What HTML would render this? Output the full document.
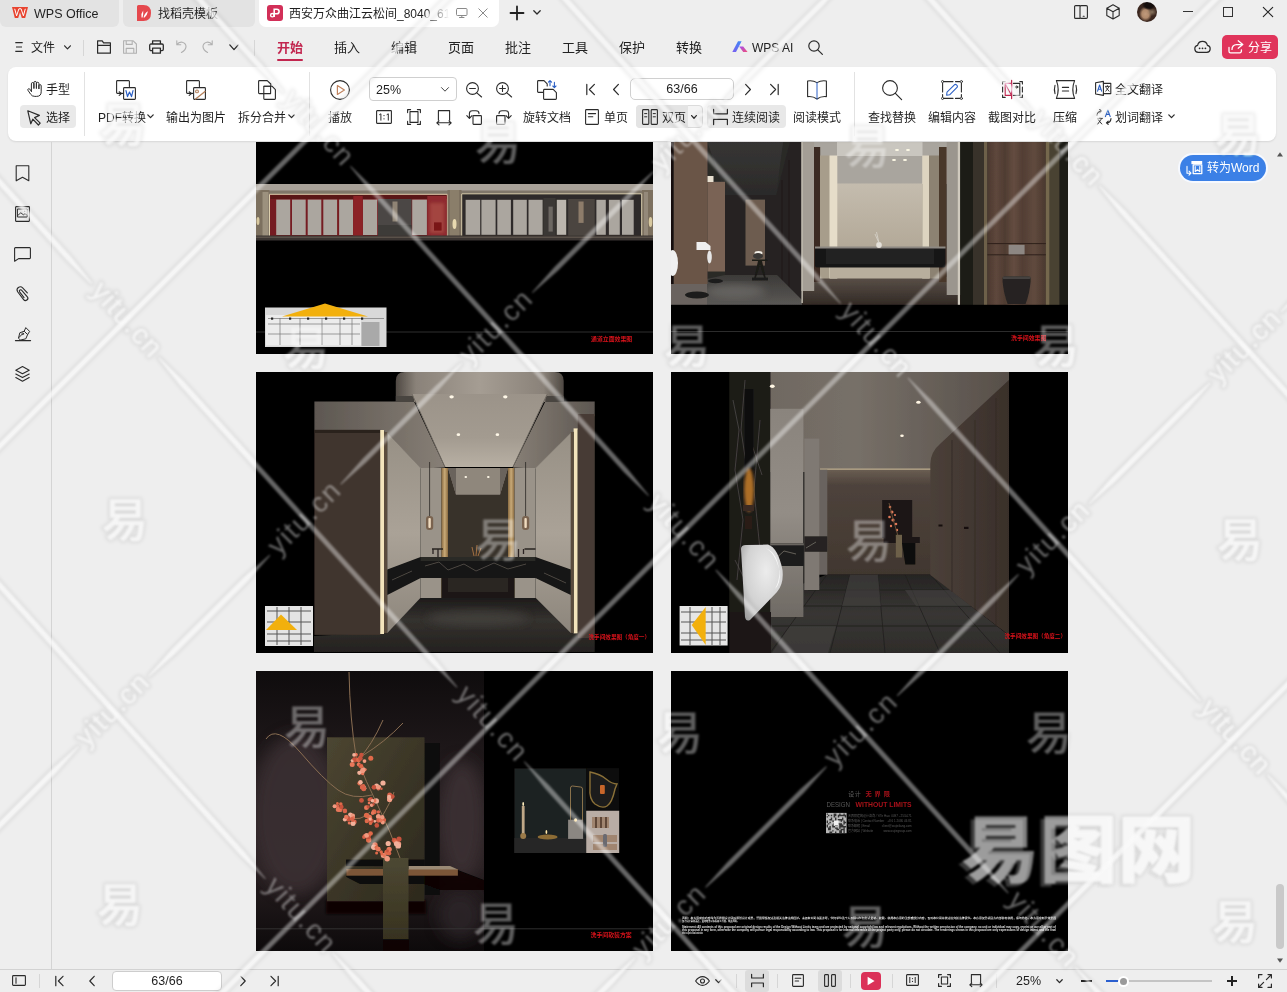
<!DOCTYPE html>
<html lang="zh-CN">
<head>
<meta charset="utf-8">
<title>WPS Office</title>
<style>
*{box-sizing:border-box;margin:0;padding:0}
html,body{width:1287px;height:992px;overflow:hidden;background:#eeeeee}
body{position:relative;font-family:"Liberation Sans","Noto Sans CJK SC",sans-serif;font-size:12px;color:#1f1f1f}
.a{position:absolute}
.t{position:absolute;white-space:nowrap;line-height:16px;height:16px}
svg{position:absolute;overflow:visible}
.ic{fill:none;stroke:#2b2b2b;stroke-width:1.2;stroke-linecap:round;stroke-linejoin:round}
.g{stroke:#b0b0b0}
.sep{position:absolute;width:1px;background:#d6d6d6}
/* title bar */
#tab1{left:0;top:0;width:118.500px;height:27px;background:#e3e3e3;border-radius:0 0 6px 6px}
#tab2{left:123px;top:0;width:132px;height:27px;background:#e3e3e3;border-radius:0 0 6px 6px}
#tab3{left:259px;top:0;width:240px;height:27px;background:#fff;border-radius:0 0 7px 7px}
.tt{font-size:13px;line-height:18px;height:18px;top:4.5px}
/* menu */
.m{font-size:13px;top:39px;line-height:18px;height:18px;color:#222}
#share{left:1222px;top:35px;width:56px;height:24px;background:#e0345b;border-radius:5px}
/* ribbon */
#ribbon{left:8px;top:67px;width:1268px;height:74px;background:#fff;border-radius:8px;box-shadow:0 1px 2px rgba(0,0,0,.10)}
.sel{position:absolute;background:#e9e9e9;border-radius:4px}
.box{position:absolute;background:#fff;border:1px solid #cfcfcf;border-radius:4px}
.l{top:110px}
/* sidebar */
#side{left:0;top:142px;width:52px;height:827px;border-right:1px solid #d4d4d4}
/* status */
#status{left:0;top:969px;width:1287px;height:23px;border-top:1px solid #d2d2d2;background:#eeeeee}
/* pages */
.pg{position:absolute;width:397px;background:#000;overflow:hidden}
</style>
</head>
<body>
<div id="root" style="position:absolute;left:0;top:0;width:1287px;height:992px;will-change:transform">

<!-- ================= PAGES ================= -->
<div id="pages" class="a" style="left:0;top:0;width:1287px;height:992px">
<svg id="pgs" style="left:0;top:0" width="1287" height="992" viewBox="0 0 1287 992">
<defs>
<filter id="b1" x="-5%" y="-5%" width="110%" height="110%"><feGaussianBlur stdDeviation="0.6"/></filter>
<filter id="b2" x="-10%" y="-10%" width="120%" height="120%"><feGaussianBlur stdDeviation="1.5"/></filter>
<filter id="b4" x="-20%" y="-20%" width="140%" height="140%"><feGaussianBlur stdDeviation="4"/></filter>
<filter id="b8" x="-30%" y="-30%" width="160%" height="160%"><feGaussianBlur stdDeviation="8"/></filter>
<clipPath id="c1"><rect x="256" y="73" width="397" height="281"/></clipPath>
<clipPath id="c2"><rect x="671" y="73" width="397" height="281"/></clipPath>
<clipPath id="c3"><rect x="256" y="372" width="397" height="281"/></clipPath>
<clipPath id="c4"><rect x="671" y="372" width="397" height="281"/></clipPath>
<clipPath id="c5"><rect x="256" y="671" width="397" height="280"/></clipPath>
<clipPath id="c6"><rect x="671" y="671" width="397" height="280"/></clipPath>
</defs>
<!--P1-->
<g id="P1" clip-path="url(#c1)">
<rect x="256" y="73" width="397" height="281" fill="#000"/>
<g filter="url(#b1)">
<rect x="256" y="184" width="397" height="7" fill="#a8a198"/>
<rect x="256" y="190.500" width="397" height="4" fill="#80776a"/>
<rect x="256" y="190" width="13.5" height="47" fill="#7b6f5f"/>
<rect x="447.5" y="190" width="14" height="47" fill="#7b6f5f"/>
<rect x="642" y="190" width="11" height="47" fill="#7b6f5f"/>
<rect x="262.500" y="192" width="6" height="45" fill="#9c917e"/>
<rect x="450" y="190" width="9" height="47" fill="#8a7e6b"/>
<rect x="644" y="192" width="4" height="45" fill="#94897a"/>
<rect x="269.500" y="194" width="178" height="43" fill="#751b20"/>
<path d="M269.500 237V194.300H447.200V237" fill="none" stroke="#dccfae" stroke-width="1"/>
<rect x="270.500" y="195" width="176" height="4" fill="#5a1518"/>
<rect x="276.2" y="199.600" width="14.0" height="35.400" fill="#aba69f"/>
<rect x="292" y="199.600" width="13.7" height="35.400" fill="#aba69f"/>
<rect x="307.7" y="199.600" width="13.6" height="35.400" fill="#aba69f"/>
<rect x="323.3" y="199.600" width="13.8" height="35.400" fill="#aba69f"/>
<rect x="339.1" y="199.600" width="14.0" height="35.400" fill="#aba69f"/>
<rect x="362.9" y="199.600" width="14.3" height="35.400" fill="#aba69f"/>
<rect x="412.2" y="199.600" width="14.7" height="35.400" fill="#aba69f"/>
<rect x="353.300" y="196" width="9.400" height="41" fill="#8c2026"/>
<rect x="378" y="199" width="33.600" height="38" fill="#4b4745"/>
<rect x="392.500" y="201.500" width="5" height="20" fill="#8f8474"/>
<rect x="378" y="225" width="33.600" height="12" fill="#3e3a38"/>
<rect x="427.300" y="196" width="19.400" height="41" fill="#8e2a2e"/>
<rect x="430" y="203" width="14" height="30" fill="#a3443f" filter="url(#b2)"/>
<rect x="434" y="222.400" width="7.600" height="8.200" fill="#7a1418"/>
<ellipse cx="454.500" cy="224" rx="2" ry="5" fill="#e8d9b0" filter="url(#b1)"/>
<ellipse cx="258" cy="221" rx="1.500" ry="4" fill="#d8c9a0"/>
<ellipse cx="650.500" cy="222" rx="1.800" ry="5" fill="#d8c9a0"/>
<rect x="461.500" y="193.500" width="180.500" height="43.500" fill="#2f2b29"/>
<path d="M461.700 237V193.800H641.700V237" fill="none" stroke="#e0d3b2" stroke-width="1"/>
<rect x="465.6" y="199.800" width="14.6" height="35" fill="#aba69f"/>
<rect x="481.4" y="199.800" width="14.2" height="35" fill="#aba69f"/>
<rect x="497.3" y="199.800" width="13.6" height="35" fill="#aba69f"/>
<rect x="513.2" y="199.800" width="13.6" height="35" fill="#aba69f"/>
<rect x="528.5" y="199.800" width="14.1" height="35" fill="#aba69f"/>
<rect x="596.4" y="199.800" width="9.4" height="35" fill="#aba69f"/>
<rect x="608.9" y="199.800" width="10.9" height="35" fill="#aba69f"/>
<rect x="622" y="199.800" width="11.7" height="35" fill="#aba69f"/>
<rect x="556.800" y="199.800" width="9.400" height="35" fill="#bbb6ae"/>
<rect x="543.500" y="198" width="12" height="39" fill="#3b3735"/>
<rect x="548.500" y="206.600" width="4.300" height="25" fill="#6c6762"/>
<rect x="568.200" y="199" width="26.500" height="38" fill="#4b4541"/>
<rect x="578.500" y="201.500" width="5.100" height="21.400" fill="#8d7c6b"/>
<rect x="256" y="235.500" width="397" height="5" fill="#3a3531"/>
<rect x="256" y="236.500" width="397" height="1.500" fill="#5a5148"/>
</g>
<rect x="256" y="331.500" width="397" height="1" fill="#2e2e2e"/>
<g filter="url(#b1)">
<rect x="265" y="307.500" width="121.500" height="39.500" fill="#d9d9d9"/>
<rect x="266" y="315" width="95" height="30.500" fill="#ececec"/>
<rect x="361.500" y="322" width="18" height="24" fill="#a9a9a9"/>
<path d="M268 318.500h116M268 324h92M268 334h92M280 318v27M300 318v27M322 318v27M340 318v27M352 318v27" stroke="#777" stroke-width=".7" fill="none"/>
<rect x="271" y="317.500" width="2.200" height="2.200" fill="#222"/>
<rect x="289" y="317.500" width="2.200" height="2.200" fill="#222"/>
<rect x="307" y="317.500" width="2.200" height="2.200" fill="#222"/>
<rect x="325" y="317.500" width="2.200" height="2.200" fill="#222"/>
<rect x="343" y="317.500" width="2.200" height="2.200" fill="#222"/>
<rect x="361" y="317.500" width="2.200" height="2.200" fill="#222"/>
<path d="M282 316.400L325 303.600 368 316.400z" fill="#f2b010"/>
</g>
<text x="591" y="341.200" font-family="Liberation Sans,Noto Sans CJK SC,sans-serif" font-size="5.900" font-weight="bold" fill="#d8121a">通道立面效果图</text>
</g>
<!--/P1-->
<!--P2-->
<g id="P2" clip-path="url(#c2)">
<rect x="671" y="73" width="397" height="281" fill="#000"/>
<defs>
<linearGradient id="p2ceil" x1="0" y1="0" x2="0" y2="1"><stop offset="0" stop-color="#454442"/><stop offset="1" stop-color="#2b2a29"/></linearGradient>
<linearGradient id="p2fl" x1="0" y1="0" x2="0" y2="1"><stop offset="0" stop-color="#3c3a38"/><stop offset="1" stop-color="#5a5855"/></linearGradient>
<linearGradient id="p2wood" x1="0" y1="0" x2="1" y2="0"><stop offset="0" stop-color="#4b392f"/><stop offset=".15" stop-color="#5e473c"/><stop offset=".3" stop-color="#4f3c32"/><stop offset=".45" stop-color="#644c40"/><stop offset=".6" stop-color="#523e34"/><stop offset=".8" stop-color="#604a3e"/><stop offset="1" stop-color="#4a382e"/></linearGradient>
<linearGradient id="p2wall" x1="0" y1="0" x2="0" y2="1"><stop offset="0" stop-color="#c4bcae"/><stop offset="1" stop-color="#b3a998"/></linearGradient>
<linearGradient id="p2mf" x1="0" y1="0" x2="0" y2="1"><stop offset="0" stop-color="#5a5048"/><stop offset="1" stop-color="#322a25"/></linearGradient>
</defs>
<g filter="url(#b1)">
<rect x="671" y="73" width="131" height="232" fill="#2a2928"/>
<path d="M700 73H792L776 196H726L707.500 142z" fill="url(#p2ceil)"/>
<rect x="725" y="195" width="52" height="82" fill="#252423"/>
<rect x="745.500" y="199.600" width="19.500" height="66" fill="#6d5c4f"/>
<path d="M776 196L790 142V73H802V300L776 276z" fill="#262423"/>
<path d="M782 180V282M789 160V290" stroke="#1a1918" stroke-width="1" fill="none"/>
<path d="M671 305V287L725 275H777L802 300V305z" fill="url(#p2fl)"/>
<ellipse cx="735" cy="291" rx="30" ry="7" fill="#7a7875" opacity=".55" filter="url(#b4)"/>
<rect x="673.500" y="73" width="34" height="211" fill="#6b5546"/>
<rect x="671" y="73" width="2.500" height="232" fill="#15110f"/>
<rect x="707.500" y="181.800" width="17.500" height="89.700" fill="#7a6454"/>
<rect x="707.500" y="176" width="6" height="6" fill="#e8e0d0" filter="url(#b1)"/>
<rect x="671" y="284" width="36" height="21" fill="#6a645e"/>
<ellipse cx="672.500" cy="263" rx="5.500" ry="13" fill="#f0f0f0"/>
<path d="M696.500 242h9l5 4v4h-14z" fill="#efefef"/>
<ellipse cx="709.500" cy="257" rx="2.300" ry="6.500" fill="#e6e6e6"/>
<ellipse cx="697" cy="295" rx="12" ry="3.500" fill="#1c1b1a"/>
<ellipse cx="715.500" cy="281" rx="7.500" ry="2.200" fill="#1c1b1a"/>
<path d="M752 259.500h15.500v1.500h-5.500l4 18h-1.500l-4.500-14-4.500 14h-1.500l4-18h-6z" fill="#1b1a19"/>
<rect x="752" y="277.500" width="16" height="3" fill="#1f1e1d"/>
<ellipse cx="758.500" cy="253" rx="4" ry="2" fill="#f4f0e8"/>
<ellipse cx="758" cy="256" rx="5" ry="3" fill="#3a3836"/>
<rect x="802" y="277" width="158" height="28" fill="url(#p2mf)"/>
<rect x="814" y="73" width="133" height="111" fill="#a9a59e"/>
<rect x="837" y="142" width="85.500" height="14" fill="#c9c6bf"/>
<rect x="837" y="183.500" width="85.500" height="64" fill="url(#p2wall)"/>
<rect x="801.400" y="73" width="12.800" height="218" fill="#a49e95"/>
<rect x="801.400" y="73" width="1.500" height="230" fill="#bdb7ab"/>
<rect x="814" y="147" width="6.200" height="135" fill="#3b2b21"/>
<rect x="820" y="155.500" width="10" height="123" fill="#a79d8b"/>
<rect x="829.500" y="155.500" width="7.800" height="123" fill="#e6ddc9"/>
<rect x="922.200" y="155.500" width="7" height="123" fill="#ddd4c0"/>
<rect x="929" y="155.500" width="10" height="123" fill="#8c8272"/>
<rect x="939" y="147" width="7.800" height="135" fill="#4a382c"/>
<rect x="946.700" y="73" width="13.600" height="222" fill="#9b968e"/>
<rect x="957.800" y="73" width="2.400" height="232" fill="#d0cabe"/>
<rect x="830" y="266" width="100" height="12.500" fill="#b8ae9d"/>
<rect x="815" y="247" width="130.500" height="20.500" rx="2" fill="#191818"/>
<rect x="815" y="246.500" width="130.500" height="2" fill="#8c8882"/>
<rect x="826" y="249" width="108" height="15" fill="#232120"/>
<ellipse cx="879" cy="245" rx="2.800" ry="3" fill="#e4e0d8"/>
<path d="M879 243l-4-9M879 243l-2.500-11" stroke="#d8d4cc" stroke-width=".8"/>
<ellipse cx="897" cy="150" rx="2" ry="1" fill="#fffbe8"/>
<ellipse cx="908" cy="150" rx="2" ry="1" fill="#fffbe8"/>
<ellipse cx="894" cy="160" rx="2" ry="1" fill="#fffbe8"/>
<ellipse cx="905" cy="160" rx="2" ry="1" fill="#fffbe8"/>
<rect x="960.300" y="73" width="108" height="232" fill="#1d1a18"/>
<rect x="973" y="73" width="14.500" height="232" fill="#39332b"/>
<rect x="984" y="73" width="3.500" height="232" fill="#6d6048"/>
<rect x="987.400" y="73" width="58.500" height="232" fill="url(#p2wood)"/>
<rect x="1045.800" y="73" width="13.600" height="232" fill="#4a4233"/>
<rect x="1045.800" y="73" width="3.500" height="232" fill="#75684e"/>
<path d="M987.400 243.600h58.500M987.400 254.800h58.500" stroke="#2e221c" stroke-width="1" fill="none"/>
<rect x="1008.600" y="244.800" width="16" height="9.600" fill="#8d8783"/>
<path d="M1002.600 278.500q0-2 2-2h24q2 0 2 2v3q-1 12-5 22.500h-18q-4-10.500-5-22.500z" fill="#262423"/>
<rect x="1002.600" y="276.600" width="28" height="2.500" rx="1" fill="#45423f"/>
</g>
<rect x="671" y="304.800" width="397" height="50" fill="#000"/>
<rect x="671" y="331" width="397" height="1" fill="#2c2c2c"/>
<text x="1011" y="340" font-family="Liberation Sans,Noto Sans CJK SC,sans-serif" font-size="5.900" font-weight="bold" fill="#d8121a">洗手间效果图</text>
</g>
<!--/P2-->
<!--P3-->
<g id="P3" clip-path="url(#c3)">
<rect x="256" y="372" width="397" height="281" fill="#000"/>
<defs>
<linearGradient id="p3top" x1="0" y1="0" x2="1" y2="0"><stop offset="0" stop-color="#4f4943"/><stop offset=".12" stop-color="#8a8279"/><stop offset=".5" stop-color="#a59d93"/><stop offset=".88" stop-color="#8a8279"/><stop offset="1" stop-color="#4f4943"/></linearGradient>
<linearGradient id="p3ceil" x1="0" y1="0" x2="0" y2="1"><stop offset="0" stop-color="#9b9389"/><stop offset=".6" stop-color="#a39b90"/><stop offset="1" stop-color="#b8b0a4"/></linearGradient>
<linearGradient id="p3sofL" x1="0" y1="0" x2="1" y2="0"><stop offset="0" stop-color="#5d5751"/><stop offset="1" stop-color="#877f76"/></linearGradient>
<linearGradient id="p3sofR" x1="1" y1="0" x2="0" y2="0"><stop offset="0" stop-color="#5d5751"/><stop offset="1" stop-color="#877f76"/></linearGradient>
<linearGradient id="p3fl" x1="0" y1="0" x2="0" y2="1"><stop offset="0" stop-color="#1d1b1a"/><stop offset=".4" stop-color="#34312e"/><stop offset="1" stop-color="#24221f"/></linearGradient>
<linearGradient id="p3gold" x1="0" y1="0" x2="1" y2="0"><stop offset="0" stop-color="#8a6a40"/><stop offset=".5" stop-color="#c8aa78"/><stop offset="1" stop-color="#8a6a40"/></linearGradient>
<linearGradient id="p3pan" x1="0" y1="0" x2="0" y2="1"><stop offset="0" stop-color="#979085"/><stop offset=".5" stop-color="#aaa297"/><stop offset="1" stop-color="#8d867c"/></linearGradient>
</defs>
<g filter="url(#b1)">
<path d="M314 652V636L387 632 420.600 597.800H535.500L570.800 632 594.700 638V652z" fill="url(#p3fl)"/>
<ellipse cx="478" cy="618" rx="50" ry="8" fill="#4a4743" opacity=".6" filter="url(#b4)"/>
<path d="M395.800 402V381q0-9 9-9H554.700q9 0 9 9V402z" fill="url(#p3top)"/>
<path d="M314.400 401.600H414L445 467.500 420.600 468.500 387.300 433.200 381 430H314.400z" fill="url(#p3sofL)"/>
<path d="M594.700 401.600H545.300L512.900 467.500 535.500 468.500 570.800 433.200 577 430 594.700 416z" fill="url(#p3sofR)"/>
<path d="M395.800 396H414V402H395.800zM545.300 396H563.700V402H545.300z" fill="#4a4540"/>
<path d="M412 394H547.300L512.900 467H445z" fill="url(#p3ceil)"/>
<path d="M412 394L445 467M547.300 394L512.900 467" stroke="#6f6961" stroke-width="1" fill="none"/>
<rect x="314.400" y="429.900" width="66" height="205" fill="#3f342e"/>
<rect x="314.400" y="429.900" width="66" height="3" fill="#2a221e"/>
<rect x="577.800" y="414" width="17" height="224" fill="#463b34"/>
<rect x="380.200" y="430" width="3.800" height="204" fill="#f3e4bc"/>
<rect x="573.600" y="428.400" width="4" height="205" fill="#f3e4bc"/>
<rect x="384" y="432" width="3.300" height="201" fill="#5a4c3c"/>
<rect x="570.800" y="432" width="2.800" height="201" fill="#5a4c3c"/>
<path d="M387.300 432.700L420.600 468V597.800L387.300 633z" fill="url(#p3pan)"/>
<path d="M570.800 432.700L535.500 468V597.800L570.800 633z" fill="url(#p3pan)"/>
<rect x="420.600" y="468" width="21" height="130" fill="#9a9389"/>
<rect x="514.300" y="468" width="21.200" height="130" fill="#9a9389"/>
<rect x="441.500" y="468" width="6.500" height="130" fill="url(#p3gold)"/>
<rect x="508" y="468" width="6.300" height="130" fill="url(#p3gold)"/>
<rect x="448" y="468" width="60" height="130" fill="#39302a"/>
<path d="M448 468H508L500 494.800H456z" fill="#8f877c"/>
<path d="M448 468L456 494.800V468zM508 468L500 494.800V468z" fill="#6a635b"/>
<rect x="441.500" y="578" width="73" height="20" fill="#1b1816"/>
<rect x="448" y="578" width="60" height="14" fill="#2a2521"/>
<path d="M387.300 569.600L420.600 557H535.500L570.800 569.600V595L535.500 578H420.600L387.300 595z" fill="#151413"/>
<path d="M420.600 557H535.500V561H420.600z" fill="#2b2927"/>
<path d="M425 566l14-4 9 8 16-6 12 7 18-8 14 6 18-5M392 580l20-9M566 583l-22-10" stroke="#5a554f" stroke-width="1" fill="none" opacity=".8"/>
<path d="M429.6 462V516" stroke="#2a2622" stroke-width=".8"/>
<rect x="426.0" y="516" width="7.200" height="14" rx="3" fill="#7a6450"/>
<rect x="428.40000000000003" y="518" width="2.400" height="10" rx="1" fill="#f0dcc0"/>
<path d="M525.6 462V516" stroke="#2a2622" stroke-width=".8"/>
<rect x="522.0" y="516" width="7.200" height="14" rx="3" fill="#7a6450"/>
<rect x="524.4" y="518" width="2.400" height="10" rx="1" fill="#f0dcc0"/>
<path d="M432 549h11M438 549v8M433 549v5" stroke="#2a2420" stroke-width="1.300" fill="none"/>
<path d="M524.5 549h11M518.5 549v8M523.5 549v5" stroke="#2a2420" stroke-width="1.300" fill="none"/>
<path d="M474 556l-2-9M476 556l1-11M478 556l3-8" stroke="#a07040" stroke-width="1" fill="none"/>
<ellipse cx="451.6" cy="396.8" rx="2.2" ry="1.65" fill="#fff8e8"/>
<ellipse cx="505.3" cy="396.8" rx="2.2" ry="1.65" fill="#fff8e8"/>
<ellipse cx="458.4" cy="434.7" rx="1.8" ry="1.35" fill="#fff8e8"/>
<ellipse cx="497.4" cy="434.7" rx="1.8" ry="1.35" fill="#fff8e8"/>
<ellipse cx="465.8" cy="477" rx="1.3" ry="0.98" fill="#fff8e8"/>
<ellipse cx="488.3" cy="477" rx="1.3" ry="0.98" fill="#fff8e8"/>
</g>
<g filter="url(#b1)">
<rect x="265" y="606" width="48" height="40" fill="#e4e4e4"/>
<path d="M267 611h44M267 622h44M267 634h44M267 641h44M277 607v38M289 607v38M301 607v38" stroke="#555" stroke-width="1" fill="none"/>
<path d="M266 630L281 614.500 297 630z" fill="#f2b010"/>
</g>
<text x="588.500" y="638.800" font-family="Liberation Sans,Noto Sans CJK SC,sans-serif" font-size="5.600" font-weight="bold" fill="#d8121a">洗手间效果图（角度一）</text>
</g>
<!--/P3-->
<!--P4-->
<g id="P4" clip-path="url(#c4)">
<rect x="671" y="372" width="397" height="281" fill="#000"/>
<defs>
<linearGradient id="p4ceil" x1="0" y1="0" x2="1" y2="0"><stop offset="0" stop-color="#6c655e"/><stop offset=".45" stop-color="#777068"/><stop offset="1" stop-color="#574f49"/></linearGradient>
<linearGradient id="p4back" x1="0" y1="0" x2="0" y2="1"><stop offset="0" stop-color="#6b5f53"/><stop offset=".15" stop-color="#4e433c"/><stop offset="1" stop-color="#41372f"/></linearGradient>
<linearGradient id="p4rw" x1="0" y1="0" x2="1" y2="0"><stop offset="0" stop-color="#4b4039"/><stop offset="1" stop-color="#392f2a"/></linearGradient>
<linearGradient id="p4fl" x1="0" y1="0" x2="0" y2="1"><stop offset="0" stop-color="#262423"/><stop offset=".5" stop-color="#383634"/><stop offset="1" stop-color="#2e2c2a"/></linearGradient>
<linearGradient id="p4pil" x1="0" y1="0" x2="0" y2="1"><stop offset="0" stop-color="#8a847d"/><stop offset=".5" stop-color="#938d86"/><stop offset="1" stop-color="#6f6a64"/></linearGradient>
<radialGradient id="p4ur" cx=".6" cy=".35" r=".8"><stop offset="0" stop-color="#ececec"/><stop offset=".6" stop-color="#d2d2d2"/><stop offset="1" stop-color="#9a9a9a"/></radialGradient>
<clipPath id="c4i"><rect x="729.300" y="372" width="279.700" height="281"/></clipPath>
</defs>
<g clip-path="url(#c4i)"><g filter="url(#b1)">
<rect x="729" y="372" width="280" height="100" fill="url(#p4ceil)"/>
<path d="M729 653V612L827 574.500H930.300L1009 635.400V653z" fill="url(#p4fl)"/>
<path d="M827 574.500L770 653M850 574.500L830 653M878 574.500L885 653M905 574.500L940 653M930.300 574.500L1000 653M808 590H951M790 606H972M772 626H998" stroke="#1e1c1b" stroke-width="1" fill="none" opacity=".7"/>
<path d="M850 574.500H878L881 606H842zM905 590L916 606H972L951 590zM790 626L772 653H828L836 626z" fill="#454341" opacity=".55"/>
<rect x="826" y="469" width="105" height="105.500" fill="url(#p4back)"/>
<rect x="820" y="468.500" width="111" height="1.300" fill="#b9aa8c"/>
<path d="M930.300 575V464Q930.300 452 941 443L1010 379V636z" fill="url(#p4rw)"/>
<path d="M952 440V592M975 420V610M996 398V626" stroke="#332a25" stroke-width=".8" fill="none"/>
<rect x="938.500" y="524.500" width="4" height="2" fill="#15110f"/><rect x="964" y="526.800" width="4.500" height="2.200" fill="#15110f"/>
<rect x="882.200" y="500" width="30" height="38" fill="#1b1715"/>
<g fill="#e0785a"><circle cx="890" cy="507" r="1.300"/><circle cx="892" cy="512" r="1.500"/><circle cx="889.500" cy="517" r="1.300"/><circle cx="893" cy="520" r="1.600"/><circle cx="896" cy="524" r="1.300"/><circle cx="891" cy="526" r="1.200"/><circle cx="895" cy="515" r="1.100"/><circle cx="897" cy="530" r="1.200"/></g>
<path d="M889 503Q893 520 898 536" stroke="#7a5a40" stroke-width=".8" fill="none"/>
<rect x="883.600" y="537" width="36.200" height="6" fill="#1a1614"/>
<rect x="895.800" y="534.800" width="6.200" height="22.700" fill="#6d6149"/>
<path d="M902 543h13.300v21.600h-10z" fill="#0e0c0b"/>
<rect x="819" y="469.700" width="8.300" height="105" fill="#69635e"/>
<rect x="804.300" y="438.600" width="15" height="151.400" fill="#7f7973"/>
<rect x="804.300" y="536.300" width="23" height="15.500" fill="#262321"/>
<rect x="729" y="372" width="41.500" height="250" fill="#1c1a19"/>
<path d="M733 400l6 30-4 40 8 50-6 60M745 380l-4 50 9 60M760 420l-6 70 8 80M735 560l20 40M752 445l10 30" stroke="#5a5652" stroke-width=".9" fill="none" opacity=".7"/>
<rect x="744.800" y="389" width="8.500" height="119" fill="#0e0c0b"/>
<ellipse cx="749" cy="490" rx="5" ry="22" fill="#c8802e" opacity=".85" filter="url(#b2)"/>
<rect x="743" y="505" width="11" height="6" fill="#3a2a20"/>
<rect x="745" y="516" width="7" height="13" fill="#2a1a16"/>
<rect x="770.300" y="408.800" width="33.100" height="208.200" fill="url(#p4pil)"/>
<rect x="770.300" y="543.300" width="33.500" height="22.700" fill="#1f1d1c"/>
<rect x="770.300" y="543.300" width="33.500" height="2" fill="#6a6660"/>
<path d="M774 560l10-9 12 3M806 548l10-6" stroke="#6a6660" stroke-width=".9" fill="none"/>
<rect x="729" y="612" width="42" height="41" fill="#1a1817"/>
<path d="M741 549Q741 545 746 545L768 544.600Q778 548 782.500 570Q784 584 777 592L750 620Q746 622 745 617z" fill="url(#p4ur)"/>
<path d="M765 548Q775 552 779.500 571Q781 583 775 589Q783 575 776 558Q772 550 765 548z" fill="#f8f8f8"/>
<ellipse cx="772.3" cy="386.2" rx="2.4" ry="1.68" fill="#fff6e4"/>
<ellipse cx="918.4" cy="402.3" rx="2.2" ry="1.54" fill="#fff6e4"/>
<ellipse cx="902" cy="435.7" rx="1.8" ry="1.26" fill="#fff6e4"/>
</g></g>
<g filter="url(#b1)">
<rect x="679.600" y="606" width="48" height="39.500" fill="#e6e6e6"/>
<path d="M681 612h45M681 622h45M681 633h45M681 640h45M690 607v38M712 607v38M720 607v38" stroke="#555" stroke-width="1" fill="none"/>
<path d="M705.700 607V645L691.700 625z" fill="#f2b010"/>
</g>
<text x="1004.500" y="638.300" font-family="Liberation Sans,Noto Sans CJK SC,sans-serif" font-size="5.600" font-weight="bold" fill="#d8121a">洗手间效果图（角度二）</text>
</g>
<!--/P4-->
<!--P5-->
<g id="P5" clip-path="url(#c5)">
<rect x="256" y="671" width="397" height="280" fill="#000"/>
<defs>
<linearGradient id="p5bg" x1="0" y1="0" x2="0" y2="1"><stop offset="0" stop-color="#0f0c0d"/><stop offset=".35" stop-color="#211a1c"/><stop offset=".7" stop-color="#281f21"/><stop offset="1" stop-color="#0d0a0b"/></linearGradient>
<linearGradient id="p5ol" x1="0" y1="0" x2="1" y2="1"><stop offset="0" stop-color="#4c4631"/><stop offset=".5" stop-color="#3b3627"/><stop offset="1" stop-color="#2d291d"/></linearGradient>
<linearGradient id="p5vs" x1="0" y1="0" x2="0" y2="1"><stop offset="0" stop-color="#4d4833"/><stop offset="1" stop-color="#37321f"/></linearGradient>
<clipPath id="c5i"><rect x="256" y="671" width="228" height="280"/></clipPath>
</defs>
<g clip-path="url(#c5i)">
<rect x="256" y="671" width="228" height="280" fill="url(#p5bg)"/>
<ellipse cx="296" cy="815" rx="45" ry="80" fill="#3d3234" opacity=".8" filter="url(#b8)"/>
<ellipse cx="462" cy="820" rx="24" ry="60" fill="#3c3235" opacity=".85" filter="url(#b8)"/>
<ellipse cx="460" cy="915" rx="22" ry="25" fill="#2e2529" opacity=".8" filter="url(#b8)"/>
<g filter="url(#b1)">
<rect x="326" y="900" width="100" height="14" fill="#070606" filter="url(#b2)"/>
<rect x="424.500" y="743" width="15" height="152" fill="#0b0909"/>
<rect x="327" y="737.300" width="97.500" height="164" fill="url(#p5ol)"/>
<rect x="346" y="859.600" width="78.500" height="6.500" fill="#090707"/>
<path d="M346.300 870H457.900L484 880V890H440L424 884H360L346.300 877z" fill="#080606" opacity=".9"/>
<rect x="346.300" y="869" width="111.600" height="6.700" fill="#7b5638"/>
<path d="M408.500 866H450L457.900 869.500H408.500z" fill="#9a8a74"/>
<rect x="383" y="858" width="25.500" height="81.200" fill="url(#p5vs)"/>
<rect x="383" y="939" width="26" height="12" fill="#0a0808" opacity=".8"/>
<path d="M400 858Q390 830 378 806T356 756Q350 720 349 672M372 795Q352 800 338 790T300 752 266 739M358 760Q372 745 383 720M362 756Q385 742 403 723M380 820Q392 800 394 792M370 812Q360 822 350 817" stroke="#8a6e52" stroke-width="1" fill="none"/>
<circle cx="354.6" cy="759.8" r="2.6" fill="#c8523c"/>
<circle cx="352.3" cy="760.6" r="1.6" fill="#f2b09a"/>
<circle cx="354.1" cy="759.2" r="1.6" fill="#c8523c"/>
<circle cx="358.5" cy="760.0" r="2.4" fill="#e06a4a"/>
<circle cx="355.8" cy="754.9" r="1.9" fill="#c8523c"/>
<circle cx="356.2" cy="754.4" r="1.5" fill="#e8775a"/>
<circle cx="359.6" cy="757.4" r="1.3" fill="#d9634a"/>
<circle cx="354.0" cy="754.9" r="1.8" fill="#f2b09a"/>
<circle cx="361.4" cy="754.9" r="2.2" fill="#c8523c"/>
<circle cx="360.5" cy="758.5" r="2.2" fill="#c8523c"/>
<circle cx="370.8" cy="758.3" r="2.5" fill="#e06a4a"/>
<circle cx="358.8" cy="764.5" r="2.0" fill="#e8775a"/>
<circle cx="364.5" cy="761.1" r="1.9" fill="#f09a80"/>
<circle cx="352.2" cy="764.4" r="2.5" fill="#e8775a"/>
<circle cx="360.9" cy="766.5" r="1.4" fill="#c8523c"/>
<circle cx="373.3" cy="800.5" r="1.4" fill="#e06a4a"/>
<circle cx="371.7" cy="805.2" r="1.8" fill="#f09a80"/>
<circle cx="366.4" cy="807.7" r="2.4" fill="#e8775a"/>
<circle cx="373.4" cy="804.4" r="1.3" fill="#c8523c"/>
<circle cx="370.9" cy="799.1" r="2.1" fill="#c8523c"/>
<circle cx="361.5" cy="800.4" r="2.4" fill="#c8523c"/>
<circle cx="369.4" cy="799.7" r="1.9" fill="#d9634a"/>
<circle cx="376.3" cy="800.9" r="2.7" fill="#f2b09a"/>
<circle cx="368.2" cy="806.8" r="1.6" fill="#c8523c"/>
<circle cx="374.4" cy="800.8" r="2.1" fill="#e8775a"/>
<circle cx="372.4" cy="800.8" r="1.7" fill="#f2b09a"/>
<circle cx="369.1" cy="803.1" r="1.4" fill="#e8775a"/>
<circle cx="371.4" cy="805.1" r="1.3" fill="#f09a80"/>
<circle cx="348.3" cy="818.8" r="2.6" fill="#c8523c"/>
<circle cx="351.4" cy="815.0" r="1.8" fill="#e06a4a"/>
<circle cx="354.3" cy="821.9" r="2.4" fill="#d9634a"/>
<circle cx="350.3" cy="814.6" r="2.2" fill="#f2b09a"/>
<circle cx="353.0" cy="823.4" r="2.5" fill="#f2b09a"/>
<circle cx="351.4" cy="816.8" r="1.5" fill="#f2b09a"/>
<circle cx="352.8" cy="815.9" r="2.3" fill="#f09a80"/>
<circle cx="344.8" cy="819.5" r="2.0" fill="#f2b09a"/>
<circle cx="352.8" cy="820.7" r="1.4" fill="#d9634a"/>
<circle cx="346.2" cy="817.0" r="2.2" fill="#e8775a"/>
<circle cx="349.3" cy="823.0" r="1.6" fill="#e8775a"/>
<circle cx="353.4" cy="817.7" r="1.6" fill="#e8775a"/>
<circle cx="351.9" cy="819.0" r="2.1" fill="#d9634a"/>
<circle cx="340.4" cy="810.0" r="1.9" fill="#f09a80"/>
<circle cx="337.2" cy="806.1" r="2.1" fill="#d9634a"/>
<circle cx="334.6" cy="806.3" r="2.0" fill="#f09a80"/>
<circle cx="337.4" cy="803.2" r="1.3" fill="#e06a4a"/>
<circle cx="340.1" cy="809.7" r="1.7" fill="#d9634a"/>
<circle cx="340.3" cy="809.3" r="2.1" fill="#e06a4a"/>
<circle cx="344.9" cy="810.9" r="2.3" fill="#d9634a"/>
<circle cx="340.8" cy="804.0" r="1.8" fill="#e06a4a"/>
<circle cx="338.3" cy="809.5" r="2.5" fill="#e8775a"/>
<circle cx="341.4" cy="806.9" r="2.2" fill="#c8523c"/>
<circle cx="379.9" cy="819.5" r="1.4" fill="#e8775a"/>
<circle cx="374.1" cy="811.8" r="2.5" fill="#e06a4a"/>
<circle cx="376.8" cy="825.4" r="2.3" fill="#c8523c"/>
<circle cx="374.8" cy="821.3" r="1.4" fill="#f2b09a"/>
<circle cx="384.2" cy="820.0" r="2.0" fill="#d9634a"/>
<circle cx="381.6" cy="818.8" r="2.4" fill="#e06a4a"/>
<circle cx="382.2" cy="818.1" r="1.3" fill="#f09a80"/>
<circle cx="382.8" cy="822.5" r="2.0" fill="#f09a80"/>
<circle cx="378.4" cy="816.4" r="2.5" fill="#f09a80"/>
<circle cx="378.3" cy="820.5" r="2.2" fill="#d9634a"/>
<circle cx="382.4" cy="817.2" r="2.1" fill="#f09a80"/>
<circle cx="380.6" cy="820.8" r="1.8" fill="#e8775a"/>
<circle cx="378.4" cy="812.0" r="1.7" fill="#d9634a"/>
<circle cx="371.1" cy="820.8" r="2.6" fill="#c8523c"/>
<circle cx="366.8" cy="821.0" r="2.2" fill="#e06a4a"/>
<circle cx="372.7" cy="813.1" r="1.9" fill="#e8775a"/>
<circle cx="369.9" cy="817.2" r="2.2" fill="#e06a4a"/>
<circle cx="368.2" cy="815.9" r="1.7" fill="#f2b09a"/>
<circle cx="370.3" cy="819.2" r="1.9" fill="#e8775a"/>
<circle cx="369.2" cy="817.1" r="2.4" fill="#e8775a"/>
<circle cx="370.2" cy="818.9" r="1.5" fill="#f2b09a"/>
<circle cx="366.5" cy="815.3" r="2.6" fill="#e06a4a"/>
<circle cx="370.5" cy="823.4" r="1.7" fill="#e06a4a"/>
<circle cx="389.0" cy="853.2" r="2.3" fill="#d9634a"/>
<circle cx="386.6" cy="857.7" r="2.1" fill="#f2b09a"/>
<circle cx="376.6" cy="853.0" r="1.5" fill="#e06a4a"/>
<circle cx="386.9" cy="852.3" r="2.6" fill="#e06a4a"/>
<circle cx="383.6" cy="854.9" r="1.6" fill="#e8775a"/>
<circle cx="383.3" cy="855.5" r="2.5" fill="#f09a80"/>
<circle cx="382.0" cy="853.9" r="1.6" fill="#e06a4a"/>
<circle cx="389.2" cy="849.3" r="2.6" fill="#e8775a"/>
<circle cx="387.2" cy="858.7" r="2.7" fill="#f09a80"/>
<circle cx="381.2" cy="851.9" r="1.7" fill="#e06a4a"/>
<circle cx="387.5" cy="851.0" r="1.4" fill="#c8523c"/>
<circle cx="384.3" cy="855.4" r="1.7" fill="#e8775a"/>
<circle cx="398.1" cy="846.1" r="1.9" fill="#e8775a"/>
<circle cx="398.1" cy="843.6" r="2.4" fill="#d9634a"/>
<circle cx="388.2" cy="843.5" r="2.6" fill="#f2b09a"/>
<circle cx="399.0" cy="839.0" r="2.6" fill="#c8523c"/>
<circle cx="394.2" cy="840.2" r="2.4" fill="#c8523c"/>
<circle cx="395.4" cy="841.5" r="2.3" fill="#e06a4a"/>
<circle cx="398.6" cy="844.1" r="2.6" fill="#f09a80"/>
<circle cx="396.4" cy="843.8" r="2.5" fill="#f2b09a"/>
<circle cx="398.3" cy="845.9" r="2.7" fill="#f2b09a"/>
<circle cx="378.4" cy="788.6" r="1.9" fill="#e8775a"/>
<circle cx="375.8" cy="785.9" r="1.3" fill="#e8775a"/>
<circle cx="376.6" cy="785.8" r="2.4" fill="#f2b09a"/>
<circle cx="379.5" cy="786.7" r="1.5" fill="#f2b09a"/>
<circle cx="374.0" cy="787.3" r="2.4" fill="#c8523c"/>
<circle cx="378.5" cy="788.5" r="1.5" fill="#c8523c"/>
<circle cx="383.0" cy="783.0" r="2.6" fill="#f2b09a"/>
<circle cx="378.2" cy="787.3" r="2.2" fill="#f09a80"/>
<circle cx="381.4" cy="788.8" r="1.3" fill="#d9634a"/>
<circle cx="363.5" cy="785.6" r="1.7" fill="#e06a4a"/>
<circle cx="361.4" cy="787.7" r="1.4" fill="#e06a4a"/>
<circle cx="359.6" cy="783.2" r="2.2" fill="#e06a4a"/>
<circle cx="364.2" cy="787.9" r="1.9" fill="#c8523c"/>
<circle cx="360.5" cy="782.3" r="2.2" fill="#f2b09a"/>
<circle cx="364.2" cy="788.3" r="2.2" fill="#f2b09a"/>
<circle cx="363.9" cy="788.0" r="2.1" fill="#d9634a"/>
<circle cx="363.7" cy="788.9" r="2.4" fill="#d9634a"/>
<circle cx="362.5" cy="787.1" r="2.6" fill="#d9634a"/>
<circle cx="388.9" cy="795.4" r="1.4" fill="#d9634a"/>
<circle cx="389.3" cy="797.2" r="1.8" fill="#c8523c"/>
<circle cx="389.7" cy="794.8" r="2.4" fill="#d9634a"/>
<circle cx="389.5" cy="799.2" r="2.4" fill="#e8775a"/>
<circle cx="389.6" cy="799.4" r="2.6" fill="#f09a80"/>
<circle cx="390.4" cy="798.1" r="2.4" fill="#f2b09a"/>
<circle cx="392.3" cy="796.6" r="2.4" fill="#c8523c"/>
<circle cx="389.1" cy="796.9" r="2.1" fill="#f2b09a"/>
<circle cx="369.6" cy="834.6" r="1.6" fill="#e8775a"/>
<circle cx="368.7" cy="840.0" r="2.7" fill="#e06a4a"/>
<circle cx="368.2" cy="836.4" r="2.6" fill="#c8523c"/>
<circle cx="368.4" cy="836.5" r="1.8" fill="#c8523c"/>
<circle cx="365.2" cy="835.8" r="2.1" fill="#e8775a"/>
<circle cx="367.1" cy="835.5" r="1.6" fill="#c8523c"/>
<circle cx="364.0" cy="837.0" r="1.9" fill="#d9634a"/>
<circle cx="366.7" cy="835.4" r="2.4" fill="#f09a80"/>
<circle cx="370.6" cy="833.5" r="2.3" fill="#e06a4a"/>
<circle cx="363.7" cy="768.9" r="1.6" fill="#f2b09a"/>
<circle cx="365.0" cy="769.6" r="1.7" fill="#e8775a"/>
<circle cx="360.9" cy="766.2" r="2.4" fill="#c8523c"/>
<circle cx="362.3" cy="771.5" r="2.1" fill="#f09a80"/>
<circle cx="361.4" cy="766.3" r="1.9" fill="#e06a4a"/>
<circle cx="362.6" cy="773.6" r="1.7" fill="#e8775a"/>
<circle cx="363.1" cy="770.1" r="2.2" fill="#f2b09a"/>
<circle cx="362.7" cy="770.5" r="2.6" fill="#f09a80"/>
<circle cx="359.3" cy="772.8" r="2.1" fill="#f2b09a"/>
<circle cx="378.1" cy="849.1" r="2.0" fill="#d9634a"/>
<circle cx="375.0" cy="844.9" r="2.7" fill="#e8775a"/>
<circle cx="376.7" cy="848.6" r="1.6" fill="#c8523c"/>
<circle cx="375.5" cy="848.4" r="1.6" fill="#c8523c"/>
<circle cx="377.5" cy="848.1" r="1.7" fill="#f09a80"/>
<circle cx="373.8" cy="847.3" r="2.7" fill="#f2b09a"/>
<circle cx="376.5" cy="847.3" r="1.9" fill="#e06a4a"/>
<circle cx="378.3" cy="849.2" r="2.4" fill="#e8775a"/>
</g></g>
<g filter="url(#b1)">
<rect x="514.400" y="768.400" width="71.600" height="84.600" fill="#1f2121"/>
<rect x="514.400" y="838" width="71.600" height="15" fill="#262828"/>
<rect x="521.800" y="806" width="2.800" height="30" fill="#bfa888"/>
<ellipse cx="523.200" cy="836" rx="3" ry="3" fill="#9a7a48"/>
<ellipse cx="523.200" cy="804" rx=".9" ry="2" fill="#fff0c0"/>
<ellipse cx="547.600" cy="837" rx="10" ry="2.600" fill="#8c6c34"/>
<ellipse cx="546.400" cy="832" rx=".9" ry="2" fill="#ffe9a8"/>
<path d="M570.500 820V788q0-2 2-2l8 1q2 0 2 2V820" stroke="#a58858" stroke-width=".8" fill="none"/>
<rect x="568.100" y="819.700" width="15" height="19.200" fill="#8b8782"/>
<ellipse cx="575.600" cy="820" rx="1.500" ry="1.800" fill="#ffe2a0"/>
<rect x="586.200" y="768.400" width="33" height="41.400" fill="#100f0e"/>
<path d="M590 772q10 2 16 7t11 5l-2 5q-3 14-8 17t-12-2q-6-5-5-16z" stroke="#8a7038" stroke-width="1.400" fill="#1c1b1a"/>
<rect x="600" y="785" width="4.800" height="9" rx="1" fill="#c8662a"/>
<rect x="586.200" y="810.700" width="33" height="42.300" fill="#b9ada5"/>
<path d="M592 817h17v11h-17zM593 835h24v7h-24zM593 844h24v6h-24z" fill="#9a7a62" opacity=".8"/>
<rect x="603" y="834" width="4" height="13" rx="1.500" fill="#6a6a70"/>
<path d="M596 817v11M601 817v11M606 817v11" stroke="#4a3326" stroke-width="1.500"/>
</g>
<rect x="256" y="928.300" width="397" height="1" fill="#3a3a3a" opacity=".8"/>
<text x="590.500" y="937.400" font-family="Liberation Sans,Noto Sans CJK SC,sans-serif" font-size="5.900" font-weight="bold" fill="#d8121a">洗手间软装方案</text>
</g>
<!--/P5-->
<!--P6-->
<g id="P6" clip-path="url(#c6)">
<rect x="671" y="671" width="397" height="280" fill="#000"/>
<g filter="url(#b1)">
<text x="848.300" y="796" font-family="Liberation Sans,Noto Sans CJK SC,sans-serif" font-size="6" fill="#5c5c5c" letter-spacing=".4">设计</text>
<text x="865.400" y="796" font-family="Liberation Sans,Noto Sans CJK SC,sans-serif" font-size="6.200" font-weight="bold" fill="#a8121a" letter-spacing="3">无界限</text>
<text x="826.500" y="807.200" font-family="Liberation Sans,Noto Sans CJK SC,sans-serif" font-size="6.400" fill="#585858" textLength="23.500" lengthAdjust="spacingAndGlyphs">DESIGN</text>
<text x="855.600" y="807.200" font-family="Liberation Sans,Noto Sans CJK SC,sans-serif" font-size="6.400" font-weight="bold" fill="#a8121a" textLength="56" lengthAdjust="spacingAndGlyphs">WITHOUT LIMITS</text>
<rect x="826" y="812.900" width="20.600" height="20.300" fill="#b8b8b8"/>
<path d="M826.6 813.4h1.400v1.400h-1.400zM826.6 816.2h1.400v1.400h-1.400zM826.6 820.4h1.400v1.400h-1.400zM826.6 821.8h1.400v1.400h-1.400zM826.6 824.6h1.400v1.400h-1.400zM826.6 826.0h1.400v1.400h-1.400zM828.0 814.8h1.400v1.400h-1.400zM828.0 823.2h1.400v1.400h-1.400zM828.0 827.4h1.400v1.400h-1.400zM828.0 828.8h1.400v1.400h-1.400zM829.4 819.0h1.400v1.400h-1.400zM829.4 821.8h1.400v1.400h-1.400zM829.4 826.0h1.400v1.400h-1.400zM829.4 827.4h1.400v1.400h-1.400zM829.4 828.8h1.400v1.400h-1.400zM829.4 831.6h1.400v1.400h-1.400zM830.8 814.8h1.400v1.400h-1.400zM830.8 817.6h1.400v1.400h-1.400zM830.8 819.0h1.400v1.400h-1.400zM830.8 831.6h1.400v1.400h-1.400zM832.2 820.4h1.400v1.400h-1.400zM832.2 824.6h1.400v1.400h-1.400zM832.2 826.0h1.400v1.400h-1.400zM832.2 830.2h1.400v1.400h-1.400zM833.6 813.4h1.400v1.400h-1.400zM833.6 814.8h1.400v1.400h-1.400zM833.6 816.2h1.400v1.400h-1.400zM833.6 820.4h1.400v1.400h-1.400zM833.6 823.2h1.400v1.400h-1.400zM833.6 826.0h1.400v1.400h-1.400zM835.0 813.4h1.400v1.400h-1.400zM835.0 814.8h1.400v1.400h-1.400zM835.0 817.6h1.400v1.400h-1.400zM835.0 819.0h1.400v1.400h-1.400zM835.0 820.4h1.400v1.400h-1.400zM835.0 823.2h1.400v1.400h-1.400zM835.0 824.6h1.400v1.400h-1.400zM835.0 827.4h1.400v1.400h-1.400zM835.0 831.6h1.400v1.400h-1.400zM836.4 824.6h1.400v1.400h-1.400zM836.4 827.4h1.400v1.400h-1.400zM836.4 828.8h1.400v1.400h-1.400zM837.8 814.8h1.400v1.400h-1.400zM837.8 816.2h1.400v1.400h-1.400zM837.8 819.0h1.400v1.400h-1.400zM837.8 823.2h1.400v1.400h-1.400zM837.8 828.8h1.400v1.400h-1.400zM839.2 813.4h1.400v1.400h-1.400zM839.2 814.8h1.400v1.400h-1.400zM839.2 819.0h1.400v1.400h-1.400zM839.2 823.2h1.400v1.400h-1.400zM839.2 824.6h1.400v1.400h-1.400zM839.2 826.0h1.400v1.400h-1.400zM839.2 827.4h1.400v1.400h-1.400zM839.2 830.2h1.400v1.400h-1.400zM839.2 831.6h1.400v1.400h-1.400zM840.6 814.8h1.400v1.400h-1.400zM840.6 819.0h1.400v1.400h-1.400zM840.6 820.4h1.400v1.400h-1.400zM840.6 823.2h1.400v1.400h-1.400zM840.6 824.6h1.400v1.400h-1.400zM840.6 826.0h1.400v1.400h-1.400zM840.6 828.8h1.400v1.400h-1.400zM840.6 830.2h1.400v1.400h-1.400zM840.6 831.6h1.400v1.400h-1.400zM842.0 814.8h1.400v1.400h-1.400zM842.0 817.6h1.400v1.400h-1.400zM842.0 819.0h1.400v1.400h-1.400zM842.0 824.6h1.400v1.400h-1.400zM842.0 826.0h1.400v1.400h-1.400zM842.0 828.8h1.400v1.400h-1.400zM843.4 813.4h1.400v1.400h-1.400zM843.4 814.8h1.400v1.400h-1.400zM843.4 820.4h1.400v1.400h-1.400zM843.4 821.8h1.400v1.400h-1.400zM843.4 823.2h1.400v1.400h-1.400zM843.4 826.0h1.400v1.400h-1.400zM843.4 827.4h1.400v1.400h-1.400zM843.4 828.8h1.400v1.400h-1.400zM843.4 830.2h1.400v1.400h-1.400zM843.4 831.6h1.400v1.400h-1.400zM844.8 814.8h1.400v1.400h-1.400zM844.8 816.2h1.400v1.400h-1.400zM844.8 821.8h1.400v1.400h-1.400zM844.8 826.0h1.400v1.400h-1.400z" fill="#333"/>
<rect x="834" y="820.500" width="4.600" height="5" fill="#f2f2f2"/>
<text x="848" y="817" font-family="Liberation Sans,Noto Sans CJK SC,sans-serif" font-size="3" fill="#5a5a5a">无界限建筑设计咨询 / YiTe Hao</text>
<text x="911.600" y="817" font-family="Liberation Sans,Noto Sans CJK SC,sans-serif" font-size="3" fill="#5a5a5a" text-anchor="end">0097 - 253-071</text>
<text x="848" y="822" font-family="Liberation Sans,Noto Sans CJK SC,sans-serif" font-size="3" fill="#5a5a5a">联系电话 | Contact Number</text>
<text x="911.600" y="822" font-family="Liberation Sans,Noto Sans CJK SC,sans-serif" font-size="3" fill="#5a5a5a" text-anchor="end">+8 6 1 2080 46 81</text>
<text x="848" y="827" font-family="Liberation Sans,Noto Sans CJK SC,sans-serif" font-size="3" fill="#5a5a5a">联系邮箱 | Email</text>
<text x="911.600" y="827" font-family="Liberation Sans,Noto Sans CJK SC,sans-serif" font-size="3" fill="#5a5a5a" text-anchor="end">client@wujieliang.com</text>
<text x="848" y="832" font-family="Liberation Sans,Noto Sans CJK SC,sans-serif" font-size="3" fill="#5a5a5a">官方网站 | Website</text>
<text x="911.600" y="832" font-family="Liberation Sans,Noto Sans CJK SC,sans-serif" font-size="3" fill="#5a5a5a" text-anchor="end">www.wujiegroup.com</text>
</g>
<g filter="url(#b1)">
<text x="682" y="918.6" font-family="Liberation Sans,Noto Sans CJK SC,sans-serif" font-size="2.7" font-weight="bold" fill="#e6e6e6" textLength="374" lengthAdjust="spacingAndGlyphs">声明：本方案所有内容均为无界限设计团队原创设计成果，受国家版权法及相关法律法规保护。未经本公司书面许可，任何单位及个人不得以任何形式复制、转载、使用本方案的全部或部分内容，否则本公司将依法追究其法律责任。本方案仅供项目方内部参考使用，请勿外传。本方案中所示效果图</text>
<text x="682" y="921.6" font-family="Liberation Sans,Noto Sans CJK SC,sans-serif" font-size="2.7" font-weight="bold" fill="#e6e6e6" textLength="57" lengthAdjust="spacingAndGlyphs">仅为设计意向表达，最终效果以实际施工为准。特此声明。</text>
<text x="682" y="927.7" font-family="Liberation Sans,Noto Sans CJK SC,sans-serif" font-size="2.6" font-weight="bold" fill="#e6e6e6" textLength="374" lengthAdjust="spacingAndGlyphs">Statement: All contents of this proposal are original design results of the Design Without Limits team and are protected by national copyright law and relevant regulations. Without the written permission of the company, no unit or individual may copy, reprint or use all or part of</text>
<text x="682" y="930.8" font-family="Liberation Sans,Noto Sans CJK SC,sans-serif" font-size="2.6" font-weight="bold" fill="#e6e6e6" textLength="374" lengthAdjust="spacingAndGlyphs">this proposal in any form, otherwise the company will pursue legal responsibility according to law. This proposal is for internal reference of the project party only, please do not circulate. The renderings shown in this proposal are only expressions of design intent, and the final</text>
<text x="682" y="933.9" font-family="Liberation Sans,Noto Sans CJK SC,sans-serif" font-size="2.6" font-weight="bold" fill="#e6e6e6" textLength="21" lengthAdjust="spacingAndGlyphs">effect is subject to actual construction.</text>
</g>
</g>
<!--/P6-->
</svg>
</div>

<!-- ================= CHROME ================= -->
<div id="top" class="a" style="left:0;top:0;width:1287px;height:142px;background:#eeeeee"></div>
<div id="tab1" class="a"></div>
<div id="tab2" class="a"></div>
<div id="tab3" class="a"></div>

<!-- title bar -->
<svg style="left:12px;top:7px" width="16" height="11" viewBox="0 0 16 11"><path d="M0 0H16L13.200 11H9.800L8 5.200 6.200 11H2.800z" fill="#e8432e"/><path d="M2.700 1.800L4.600 8.800 6.900 1.800H9.100L11.400 8.800 13.300 1.800" fill="none" stroke="#fff" stroke-width="1" stroke-linejoin="miter"/></svg>
<div class="t tt" style="left:34px;font-size:12.5px">WPS Office</div>
<svg style="left:137px;top:5px" width="14" height="16" viewBox="0 0 14 16"><path d="M0 1.5Q0 0 1.5 0H6.5Q14 0 14 8Q14 16 6.5 16H0z" fill="#e5484d"/><path d="M4.5 12.5Q4 8 6.2 5.5Q6.5 9 5.6 12.5zM6.5 12.6Q7.5 8 11 6.2Q10 10.5 7.6 12.6z" fill="#fff"/></svg>
<div class="t tt" style="left:158px;font-size:12px">找稻壳模板</div>
<div class="a" style="left:267px;top:5px;width:16px;height:16px;background:#d22f58;border-radius:3px"></div>
<svg style="left:267px;top:5px" width="16" height="16" viewBox="0 0 16 16"><path d="M7.2 12V4.2h2.6a2.3 2.3 0 0 1 0 4.6H7.2" fill="none" stroke="#fff" stroke-width="1.6"/><circle cx="5.3" cy="10.2" r="1.7" fill="none" stroke="#fff" stroke-width="1.4"/></svg>
<div class="t tt" style="left:289px;font-size:12px;width:160px;overflow:hidden;-webkit-mask-image:linear-gradient(90deg,#000 86%,transparent 100%);mask-image:linear-gradient(90deg,#000 86%,transparent 100%)">西安万众曲江云松间_8040_61</div>
<svg style="left:456px;top:8px" width="12" height="10" viewBox="0 0 12 10"><rect x="0.5" y="0.5" width="10.5" height="7" rx="1" class="ic" style="stroke:#8a8a8a;stroke-width:1"/><path d="M3.5 9.5h4.5M5.8 7.5v2" class="ic" style="stroke:#8a8a8a;stroke-width:1"/></svg>
<svg style="left:478px;top:8px" width="10" height="10" viewBox="0 0 10 10"><path d="M0.8 0.8l8.4 8.4M9.2 0.8L0.8 9.2" class="ic" style="stroke:#8a8a8a;stroke-width:1"/></svg>
<svg style="left:510px;top:6px" width="14" height="14" viewBox="0 0 14 14"><path d="M7 0.5v13M0.5 7h13" class="ic" style="stroke:#222;stroke-width:1.8"/></svg>
<svg style="left:533px;top:10px" width="8" height="5" viewBox="0 0 8 5"><path d="M0.8 0.8L4 4l3.2-3.2" class="ic" style="stroke-width:1.3"/></svg>
<svg style="left:1074px;top:5px" width="14" height="14" viewBox="0 0 14 14"><path d="M6 0.6h-4.4a1 1 0 0 0-1 1v10.8a1 1 0 0 0 1 1h4.4" class="ic" style="stroke-width:1.1"/><rect x="6" y="0.6" width="7.4" height="12.8" rx="1.2" class="ic" style="stroke-width:1.1"/><path d="M9.2 11.2h1" class="ic" style="stroke-width:1.1"/></svg>
<svg style="left:1106px;top:4px" width="14" height="16" viewBox="0 0 14 16"><path d="M7 0.8l6.2 3.4v7.2L7 15 0.8 11.4V4.2zM0.8 4.2L7 7.8l6.2-3.6M7 7.8V15" class="ic" style="stroke-width:1.1"/></svg>
<div class="a" style="left:1137px;top:2px;width:20px;height:20px;border-radius:50%;background:radial-gradient(ellipse 7px 5px at 12px 3px,#140d0c 0,#140d0c 60%,transparent 100%),radial-gradient(ellipse 5px 4px at 15px 10px,#8a7660 0,transparent 100%),radial-gradient(ellipse 6.500px 7.500px at 8.500px 12px,#c09a7c 0,#b08a6c 55%,transparent 100%),#3a261e"></div>
<div class="a" style="left:1183px;top:11px;width:10px;height:1px;background:#333"></div>
<div class="a" style="left:1223px;top:7px;width:10px;height:10px;border:1px solid #333"></div>
<svg style="left:1263px;top:7px" width="10" height="10" viewBox="0 0 10 10"><path d="M0.3 0.3l9.4 9.4M9.7 0.3L0.3 9.7" class="ic" style="stroke:#222;stroke-width:1.1"/></svg>

<!-- menu row -->
<svg style="left:15px;top:42px" width="8" height="10" viewBox="0 0 8 10"><path d="M0.3 0.7h7.4M1 5h6M0.3 9.3h7.4" class="ic" style="stroke-width:1.2;stroke-linecap:butt"/></svg>
<div class="t m" style="left:31px;font-size:12px">文件</div>
<svg style="left:64px;top:45px" width="7" height="5" viewBox="0 0 7 5"><path d="M0.6 0.8L3.5 3.8 6.4 0.8" class="ic" style="stroke-width:1.2"/></svg>
<div class="sep" style="left:83px;top:40px;height:16px"></div>
<svg style="left:97px;top:40px" width="14" height="14" viewBox="0 0 14 14"><path d="M0.6 13.2V0.8h4.6l1.4 2h6.8v10.4zM0.6 5.4h12.8" class="ic" style="stroke-width:1.2"/></svg>
<svg style="left:123px;top:40px" width="14" height="14" viewBox="0 0 14 14"><path d="M0.6 0.8h9.6l3.2 3.2v9.2H0.6zM3.2 0.8v3.6h6V0.8M3.2 13.2V8.4h7.6v4.8" class="ic g" style="stroke-width:1.1"/></svg>
<svg style="left:149px;top:40px" width="15" height="14" viewBox="0 0 15 14"><path d="M3.6 4V0.8h7.8V4M3.6 10.6H2a1.3 1.3 0 0 1-1.3-1.3V5.3A1.3 1.3 0 0 1 2 4h11a1.3 1.3 0 0 1 1.3 1.3v4a1.3 1.3 0 0 1-1.3 1.3h-1.6M3.6 8.2h7.8v5H3.6z" class="ic" style="stroke-width:1.3"/></svg>
<svg style="left:176px;top:40px" width="11" height="13" viewBox="0 0 11 13"><path d="M0.8 0.8v4h4M1 4.6Q3 1.6 6.2 2.2Q10 3.2 10 6.6Q9.8 10 5.4 12.4" class="ic g" style="stroke-width:1.1"/></svg>
<svg style="left:202px;top:40px" width="11" height="13" viewBox="0 0 11 13"><path d="M10.2 0.8v4h-4M10 4.6Q8 1.6 4.8 2.2Q1 3.2 1 6.6Q1.2 10 5.6 12.4" class="ic g" style="stroke-width:1.1"/></svg>
<svg style="left:229px;top:44px" width="10" height="7" viewBox="0 0 10 7"><path d="M0.8 0.9L5 5.6 9.2 0.9" class="ic" style="stroke-width:1.3"/></svg>
<div class="sep" style="left:254px;top:40px;height:16px"></div>
<div class="t m" style="left:277px;font-weight:bold;color:#c2264f">开始</div>
<div class="a" style="left:277px;top:59px;width:26px;height:2px;background:#c2264f;border-radius:1px"></div>
<div class="t m" style="left:334px">插入</div>
<div class="t m" style="left:391px">编辑</div>
<div class="t m" style="left:448px">页面</div>
<div class="t m" style="left:505px">批注</div>
<div class="t m" style="left:562px">工具</div>
<div class="t m" style="left:619px">保护</div>
<div class="t m" style="left:676px">转换</div>
<svg style="left:732px;top:41px" width="16" height="11" viewBox="0 0 16 11"><defs><linearGradient id="ai1" x1="0" y1="1" x2="1" y2="0"><stop offset="0" stop-color="#7b5cf0"/><stop offset="1" stop-color="#3b8cf5"/></linearGradient><linearGradient id="ai2" x1="0" y1="0" x2="1" y2="1"><stop offset="0" stop-color="#a04bf0"/><stop offset="1" stop-color="#f0507a"/></linearGradient></defs><path d="M0.3 11L6 0.2h3.6L4 11z" fill="url(#ai1)"/><path d="M7.2 5.4h4l4.4 5.6h-4.4z" fill="url(#ai2)"/></svg>
<div class="t m" style="left:752px;font-size:12px">WPS AI</div>
<svg style="left:808px;top:40px" width="15" height="15" viewBox="0 0 15 15"><circle cx="6" cy="6" r="5.2" class="ic" style="stroke-width:1.2"/><path d="M9.8 9.8l4.6 4.6" class="ic" style="stroke-width:1.2"/></svg>
<svg style="left:1194px;top:40px" width="17" height="13" viewBox="0 0 17 13"><path d="M4.2 12.4a3.6 3.6 0 0 1-.6-7.1 5 5 0 0 1 9.8 0 3.6 3.6 0 0 1-.6 7.1z" class="ic" style="stroke-width:1.2"/><circle cx="5.6" cy="8.3" r=".9" fill="#2b2b2b"/><circle cx="8.5" cy="8.3" r=".9" fill="#2b2b2b"/><circle cx="11.4" cy="8.3" r=".9" fill="#2b2b2b"/></svg>
<div id="share" class="a"></div>
<svg style="left:1228px;top:40px" width="16" height="14" viewBox="0 0 16 14"><path d="M10.2 0.8L14.8 4.6 10.2 8.2M14.4 4.6H8.6Q4 4.8 4 9.4M1 7.4v3.8a1.6 1.6 0 0 0 1.6 1.6h9.2a1.6 1.6 0 0 0 1.6-1.6V9.8" class="ic" style="stroke:#fff;stroke-width:1.3"/></svg>
<div class="t m" style="left:1248px;font-size:12px;color:#fff">分享</div>
<div id="ribbon" class="a"></div>

<!-- ribbon content -->
<svg style="left:27px;top:81px" width="15" height="16" viewBox="0 0 15 16"><path d="M4.4 10.400V2.800a1.250 1.250 0 0 1 2.500 0V7.200M6.900 7.200V1.700a1.250 1.250 0 0 1 2.500 0V7.200M9.400 7.200V2.500a1.250 1.250 0 0 1 2.500 0V7.600M11.900 7.600V4.800a1.150 1.150 0 0 1 2.300 0V10.800Q14.200 15.400 9.400 15.400H7.800Q5 15.400 3.600 13.200L.9 9.200a1.100 1.100 0 0 1 1.800-1.200L4.400 10.400" class="ic" style="stroke-width:1"/></svg>
<div class="t" style="left:46px;top:82px">手型</div>
<div class="sel" style="left:20px;top:105px;width:56px;height:23px"></div>
<svg style="left:27px;top:110px" width="14" height="14" viewBox="0 0 14 14"><path d="M0.8 0.8l11.6 4.6-4.8 2.2 5.6 5.6-1.8 1.8-5.6-5.8-2 4.6z" class="ic" style="stroke-width:1.2"/></svg>
<div class="t l" style="left:46px">选择</div>
<div class="sep" style="left:84px;top:72px;height:64px;background:#e2e2e2"></div>

<svg style="left:116px;top:80px" width="20" height="20" viewBox="0 0 20 20"><path d="M6.6 13.4H1.4a.8.8 0 0 1-.8-.8V1.4a.8.8 0 0 1 .8-.8h11.2a.8.8 0 0 1 .8.8v5.2" class="ic" style="stroke-width:1.1"/><path d="M3.2 11.8l2.2 1.8-2.2 1.8" class="ic" style="stroke-width:1.1"/><rect x="7.6" y="7.6" width="11.8" height="11.8" rx=".8" class="ic" style="stroke-width:1.1;fill:#fff"/><path d="M10 10.6l1.5 6 2-4.6 2 4.6 1.5-6" class="ic" style="stroke:#2b5fc4;stroke-width:1.2"/></svg>
<div class="t l" style="left:98px">PDF转换</div>
<svg style="left:147px;top:114px" width="7" height="5" viewBox="0 0 7 5"><path d="M0.8 0.9L3.5 3.6 6.2 0.9" class="ic" style="stroke-width:1.3"/></svg>

<svg style="left:186px;top:80px" width="20" height="20" viewBox="0 0 20 20"><path d="M6.6 13.4H1.4a.8.8 0 0 1-.8-.8V1.4a.8.8 0 0 1 .8-.8h11.2a.8.8 0 0 1 .8.8v5.2" class="ic" style="stroke-width:1.1"/><path d="M3.2 11.8l2.2 1.8-2.2 1.8" class="ic" style="stroke-width:1.1"/><rect x="7.6" y="7.6" width="11.8" height="11.8" rx=".8" class="ic" style="stroke-width:1.1;fill:#fff"/><circle cx="11" cy="11.4" r="1.4" class="ic" style="stroke:#b5805a;stroke-width:1.1"/><path d="M9.6 19L19 11.4" class="ic" style="stroke:#b5805a;stroke-width:1.3"/></svg>
<div class="t l" style="left:166px">输出为图片</div>

<svg style="left:258px;top:80px" width="18" height="20" viewBox="0 0 18 20"><path d="M5.8 13.6H1.4a.8.8 0 0 1-.8-.8V1.4a.8.8 0 0 1 .8-.8h7.8l3.6 3.4v2" class="ic" style="stroke-width:1.1"/><path d="M6 6.2h8l3.4 3.4v9a.8.8 0 0 1-.8.8H6.6a.8.8 0 0 1-.8-.8V7a.8.8 0 0 1 .8-.8z" class="ic" style="stroke-width:1.1"/><path d="M5.8 6.2h6.800v7.4h-6.8" class="ic" style="stroke-width:1.1"/></svg>
<div class="t l" style="left:238px">拆分合并</div>
<svg style="left:288px;top:114px" width="7" height="5" viewBox="0 0 7 5"><path d="M0.8 0.9L3.5 3.6 6.2 0.9" class="ic" style="stroke-width:1.3"/></svg>
<div class="sep" style="left:309px;top:72px;height:64px;background:#e2e2e2"></div>

<svg style="left:330px;top:80px" width="20" height="20" viewBox="0 0 20 20"><circle cx="10" cy="10" r="9.4" class="ic" style="stroke-width:1.1"/><path d="M7.4 5.6v8.8l7-4.4z" class="ic" style="stroke:#c08460;stroke-width:1.2"/></svg>
<div class="t l" style="left:328px">播放</div>

<div class="box" style="left:369px;top:77px;width:88px;height:24px"></div>
<div class="t" style="left:376px;top:82px;font-size:12.5px">25%</div>
<svg style="left:441px;top:87px" width="8" height="5" viewBox="0 0 8 5"><path d="M0.5 0.6L4 4.2 7.5 0.6" class="ic" style="stroke-width:1;stroke:#444"/></svg>
<svg style="left:466px;top:82px" width="16" height="15" viewBox="0 0 16 15"><circle cx="6.500" cy="6.500" r="5.900" class="ic" style="stroke-width:1.100"/><path d="M10.800 10.800l4.800 4.200M3.600 6.500h5.800" class="ic" style="stroke-width:1.100"/></svg>
<svg style="left:496px;top:82px" width="16" height="15" viewBox="0 0 16 15"><circle cx="6.500" cy="6.500" r="5.900" class="ic" style="stroke-width:1.100"/><path d="M10.800 10.800l4.800 4.200M3.600 6.500h5.800M6.500 3.600v5.800" class="ic" style="stroke-width:1.100"/></svg>

<svg style="left:376px;top:110px" width="16" height="14" viewBox="0 0 16 14"><rect x=".6" y=".6" width="14.800" height="12.800" rx=".6" class="ic" style="stroke-width:1.1"/><path d="M3.600 4.600l1.300-.8v6.400M11 4.600l1.300-.8v6.400" class="ic" style="stroke-width:1"/><circle cx="8" cy="5.600" r=".65" fill="#2b2b2b"/><circle cx="8" cy="8.800" r=".65" fill="#2b2b2b"/></svg>
<svg style="left:407px;top:109px" width="14" height="16" viewBox="0 0 14 16"><path d="M.6 3.600V.6h3M10.400.6h3v3M13.400 12.400v3h-3M3.600 15.400h-3v-3" class="ic" style="stroke-width:1.1"/><rect x="3" y="2.600" width="8" height="10.800" class="ic" style="stroke-width:1.100"/></svg>
<svg style="left:436px;top:110px" width="16" height="15" viewBox="0 0 16 15"><path d="M2.400 10.200V.6h11.200v9.600" class="ic" style="stroke-width:1.100"/><path d="M.8 12.800h14.400M3 10.800l-2.200 2 2.200 2M13 10.800l2.200 2-2.200 2" class="ic" style="stroke-width:1.100"/></svg>
<svg style="left:466px;top:110px" width="16" height="15" viewBox="0 0 16 15"><rect x="7" y="5.600" width="8.400" height="8.800" rx=".6" class="ic" style="stroke-width:1.100"/><path d="M13 3.600Q13 .8 10 .8H6.400Q3.400 .8 3.400 3.600V8M.8 5.600L3.400 8.400 6 5.600" class="ic" style="stroke-width:1.100"/></svg>
<svg style="left:496px;top:110px" width="16" height="15" viewBox="0 0 16 15"><rect x=".6" y="5.600" width="8.400" height="8.800" rx=".6" class="ic" style="stroke-width:1.100"/><path d="M3 3.600Q3 .8 6 .8h3.600Q12.600 .8 12.600 3.600V8M15.200 5.600L12.600 8.400 10 5.600" class="ic" style="stroke-width:1.100"/></svg>

<svg style="left:537px;top:80px" width="21" height="20" viewBox="0 0 21 20"><path d="M6 12.400H1.400a.8.8 0 0 1-.8-.8V1.400a.8.8 0 0 1 .8-.8H7l3.200 3.200V6" class="ic" style="stroke-width:1.100"/><path d="M7.400 9.400h8.800l3.200 3.200v6a.8.8 0 0 1-.8.800H7.400a.8.8 0 0 1-.8-.8v-8.400a.8.800 0 0 1 .8-.8z" class="ic" style="stroke-width:1.100;fill:#fff"/><path d="M13 .8v5M11.400 2.200L13 .6l1.600 1.600M17.400 7.400v-5M15.800 6l1.600 1.600L19 6" class="ic" style="stroke:#2b5fc4;stroke-width:1.100"/></svg>
<div class="t l" style="left:523px">旋转文档</div>

<svg style="left:586px;top:84px" width="9" height="11" viewBox="0 0 9 11"><path d="M.8.400v10.200M8.400.4L3.400 5.500l5 5.100" class="ic" style="stroke-width:1.200"/></svg>
<svg style="left:613px;top:84px" width="6" height="11" viewBox="0 0 6 11"><path d="M5.400.4L.6 5.500l4.800 5.100" class="ic" style="stroke-width:1.200"/></svg>
<div class="box" style="left:630px;top:78px;width:104px;height:22px;border-color:#d0d0d0;border-radius:5px"></div>
<div class="t" style="left:630px;top:81px;width:104px;text-align:center;font-size:12.5px">63/66</div>
<svg style="left:745px;top:84px" width="6" height="11" viewBox="0 0 6 11"><path d="M.6.400L5.400 5.500.6 10.600" class="ic" style="stroke-width:1.200"/></svg>
<svg style="left:770px;top:84px" width="9" height="11" viewBox="0 0 9 11"><path d="M8.200.400v10.200M.6.400l5 5.100-5 5.100" class="ic" style="stroke-width:1.200"/></svg>

<svg style="left:585px;top:109px" width="14" height="16" viewBox="0 0 14 16"><rect x=".6" y=".6" width="12.800" height="14.800" rx=".8" class="ic" style="stroke-width:1.100"/><path d="M3.400 4.600h7.200M3.400 7.800h4.400" class="ic" style="stroke-width:1.100"/></svg>
<div class="t l" style="left:604px">单页</div>
<div class="a" style="left:636px;top:105px;width:67px;height:23px;background:#f4f4f4;border:1px solid #dcdcdc;border-radius:4px"></div>
<div class="a" style="left:636px;top:105px;width:52px;height:23px;background:#e4e4e4;border-radius:4px 0 0 4px"></div>
<svg style="left:642px;top:109px" width="16" height="16" viewBox="0 0 16 16"><rect x=".6" y=".6" width="6.200" height="14.800" rx=".8" class="ic" style="stroke-width:1.100"/><rect x="9.200" y=".6" width="6.200" height="14.800" rx=".8" class="ic" style="stroke-width:1.100"/><path d="M2.600 4.600h2.200M2.600 7.800h2.200M11.200 4.600h2.200M11.200 7.800h2.200" class="ic" style="stroke-width:1"/></svg>
<div class="t l" style="left:662px">双页</div>
<svg style="left:691px;top:115px" width="6" height="4" viewBox="0 0 6 4"><path d="M.6.600L3 3.200 5.400.6" class="ic" style="stroke-width:1.300"/></svg>
<div class="sel" style="left:707px;top:105px;width:79px;height:23px;background:#e8e8e8"></div>
<svg style="left:713px;top:109px" width="15" height="16" viewBox="0 0 15 16"><path d="M.6.400V4.800h13.800V.4M.6 15.600V10.400h13.800v5.200" class="ic" style="stroke-width:1.200"/></svg>
<div class="t l" style="left:732px">连续阅读</div>

<svg style="left:807px;top:80px" width="20" height="20" viewBox="0 0 20 20"><path d="M10 2.600Q6 .2.600 1v15.600Q6 16 10 19Q14 16 19.400 16.600V1Q14 .2 10 2.600z" class="ic" style="stroke-width:1.100"/><path d="M10 2.600V19" class="ic" style="stroke:#2b5fc4;stroke-width:1"/></svg>
<div class="t l" style="left:793px">阅读模式</div>
<div class="sep" style="left:854px;top:72px;height:64px;background:#e2e2e2"></div>

<svg style="left:882px;top:80px" width="20" height="20" viewBox="0 0 20 20"><circle cx="8" cy="8" r="7.400" class="ic" style="stroke-width:1.100"/><path d="M13.400 13.400l6.200 6.200" class="ic" style="stroke-width:1.200"/></svg>
<div class="t l" style="left:868px">查找替换</div>

<svg style="left:941px;top:80px" width="22" height="20" viewBox="0 0 22 20"><path d="M3 1.600h16M3 18.400h16M1.600 3v14M20.400 3v14" class="ic" style="stroke-width:1.100;stroke-dasharray:9 2.500"/><circle cx="1.600" cy="1.600" r="1.100" class="ic" style="stroke-width:.9;fill:#fff"/><circle cx="20.400" cy="1.600" r="1.100" class="ic" style="stroke-width:.9;fill:#fff"/><circle cx="1.600" cy="18.400" r="1.100" class="ic" style="stroke-width:.9;fill:#fff"/><circle cx="20.400" cy="18.400" r="1.100" class="ic" style="stroke-width:.9;fill:#fff"/><path d="M5.600 15.200l.4-3 7.400-7.400a1.400 1.400 0 0 1 2 0l.6.600a1.400 1.400 0 0 1 0 2L8.600 14.800z" class="ic" style="stroke:#2b5fc4;stroke-width:1.100"/></svg>
<div class="t l" style="left:928px">编辑内容</div>

<svg style="left:1002px;top:80px" width="21" height="19" viewBox="0 0 21 19"><path d="M.6 4V1.600h2.600M17.800 1.600h2.600V4M20.400 15v2.400h-2.600M3.200 17.400H.6V15M.6 7v5M20.400 7v5" class="ic" style="stroke-width:1.100"/><path d="M11.400 3.400h6.400v12h-6.400" class="ic" style="stroke-width:1.100"/><circle cx="14.800" cy="7" r="1" class="ic" style="stroke-width:1"/><path d="M9.600 3.400H3.200v12h6.400zM3.200 3.400l6.400 12" class="ic" style="stroke:#c2264f;stroke-width:1.100"/><path d="M9.600.4v18.200" class="ic" style="stroke:#c2264f;stroke-width:1.200"/></svg>
<div class="t l" style="left:988px">截图对比</div>

<svg style="left:1054px;top:80px" width="23" height="19" viewBox="0 0 23 19"><path d="M2.400.6h18.200Q17 9.500 20.600 18.400H2.400Q6 9.500 2.400.6z" class="ic" style="stroke-width:1.100"/><path d="M8.400 7.400h6.200M8.400 11h6.200" class="ic" style="stroke-width:1.100"/><path d="M1 5.400Q-.2 9.500 1 13.600M22 5.400Q23.200 9.500 22 13.600" class="ic" style="stroke-width:1.100"/></svg>
<div class="t l" style="left:1053px">压缩</div>

<svg style="left:1095px;top:81px" width="17" height="15" viewBox="0 0 17 15"><path d="M8.400 14.400L.6 13V1.800L8.400.4z" class="ic" style="stroke-width:1.100"/><path d="M8.400 2.400h7.400v10.200H8.400" class="ic" style="stroke-width:1.100"/><path d="M2.600 10.200L4.600 4l2 6.200M3.200 8.200h2.800" class="ic" style="stroke:#2b5fc4;stroke-width:1.100"/><path d="M10.400 5.400h4M12.400 4.600v.8M10.800 10.200l3.200-4.400M11 6.400l3 3.800" class="ic" style="stroke-width:.9"/></svg>
<div class="t" style="left:1115px;top:82px">全文翻译</div>
<svg style="left:1096px;top:109px" width="16" height="16" viewBox="0 0 16 16"><path d="M1 6.400Q1.400 2.200 5.400 2.200M3.800.6L5.600 2.200 3.800 3.800" class="ic" style="stroke-width:1.100"/><path d="M15 9.600Q14.600 13.800 10.600 13.800M12.200 15.400l-1.800-1.600 1.800-1.600" class="ic" style="stroke-width:1.100"/><path d="M9.400 7.600L11.800 1l2.400 6.600M10.200 5.400h3.200" class="ic" style="stroke:#2b5fc4;stroke-width:1.100"/><path d="M1.400 9.400h5M3.900 8.600v.8M1.800 15l3.800-5.400M2 10.400l3.800 4.600" class="ic" style="stroke-width:.95"/></svg>
<div class="t l" style="left:1115px">划词翻译</div>
<svg style="left:1168px;top:114px" width="7" height="5" viewBox="0 0 7 5"><path d="M0.800 0.900L3.500 3.600 6.200 0.900" class="ic" style="stroke-width:1.300"/></svg>
<div id="side" class="a"></div>
<div id="status" class="a"></div>


<!-- sidebar icons -->
<svg style="left:15px;top:165px" width="15" height="17" viewBox="0 0 15 17"><path d="M1.200.8h12.600v15L7.500 12.200 1.200 15.800z" class="ic" style="stroke-width:1.100"/></svg>
<svg style="left:15px;top:206px" width="15" height="16" viewBox="0 0 15 16"><rect x=".6" y=".6" width="13.800" height="14.800" rx=".6" class="ic" style="stroke-width:1.100"/><rect x="2.800" y="3" width="9.400" height="8" class="ic" style="stroke-width:1"/><path d="M2.800 9.400l3-2.600 2.600 2 1.600-1.200 2.200 1.600" class="ic" style="stroke-width:.9"/><circle cx="9.800" cy="5.200" r=".7" fill="#2b2b2b"/></svg>
<svg style="left:14px;top:247px" width="17" height="15" viewBox="0 0 17 15"><path d="M1.400.6h14.200a.8.8 0 0 1 .8.800v9.400a.8.800 0 0 1-.8.800H4.600L.6 14.200V1.400a.8.800 0 0 1 .8-.8z" class="ic" style="stroke-width:1.100"/></svg>
<svg style="left:14px;top:286px" width="17" height="16" viewBox="0 0 17 16"><path d="M13.200 6.400L8 1.800a3.200 3.200 0 0 0-4.600 4.400l6.800 7.200a2.300 2.300 0 0 0 3.400-3.200L7.400 4.400a1.300 1.300 0 0 0-2 1.800l5 5.200" class="ic" style="stroke-width:1.100" transform="rotate(6 8 8)"/></svg>
<svg style="left:15px;top:326px" width="16" height="16" viewBox="0 0 16 16"><path d="M.4 14.600h15.200" class="ic" style="stroke-width:1.100"/><path d="M3.600 11.800l1.200-5 4.400-1.600 3.400 3.400-1.800 4.200-5 1.200zM9.200 5.200l1.600-3.600 3.800 3.800-2 3.200M3.800 11.600l3.400-3.400" class="ic" style="stroke-width:1"/><circle cx="7.800" cy="7.800" r=".8" class="ic" style="stroke-width:.9"/></svg>
<svg style="left:15px;top:366px" width="15" height="16" viewBox="0 0 15 16"><path d="M7.500.6l6.700 3.600-6.700 3.600L.8 4.200zM.8 8l6.700 3.600L14.200 8M.8 11.600l6.700 3.600 6.700-3.600" class="ic" style="stroke-width:1.100"/></svg>

<!-- convert to word -->
<div class="a" style="left:1178px;top:153px;width:90px;height:30px;border-radius:15px;background:#f6f9ff"></div>
<div class="a" style="left:1180px;top:155px;width:86px;height:26px;border-radius:13px;background:#3b80e6"></div>
<svg style="left:1186px;top:160px" width="17" height="16" viewBox="0 0 17 16"><path d="M5.400 1h10.800v3.200H5.400z" fill="#fff"/><rect x="7.200" y="4.800" width="8.600" height="8.800" class="ic" style="stroke:#fff;stroke-width:1.300"/><path d="M9.200 6.600v5l2.300-1.800 2.300 1.800v-5" class="ic" style="stroke:#fff;stroke-width:1.100"/><path d="M1 6.400v6.800h3.600M3 11.200l2 2-2 2" class="ic" style="stroke:#fff;stroke-width:1.100"/></svg>
<div class="t" style="left:1207px;top:160px;color:#fff">转为Word</div>

<!-- scrollbar -->
<svg style="left:1277px;top:152px" width="6" height="5" viewBox="0 0 6 5"><path d="M3 .2l3 4.400H0z" fill="#555"/></svg>
<div class="a" style="left:1276px;top:884px;width:8px;height:65px;border-radius:4px;background:#c9c9c9"></div>
<svg style="left:1277px;top:958px" width="6" height="5" viewBox="0 0 6 5"><path d="M0 .4h6L3 4.800z" fill="#555"/></svg>

<!-- status bar content -->
<svg style="left:12px;top:975px" width="14" height="11" viewBox="0 0 14 11"><rect x=".6" y=".6" width="12.800" height="9.800" rx=".8" class="ic" style="stroke-width:1.100"/><path d="M4 2.800v5.400" class="ic" style="stroke-width:1.100"/></svg>
<div class="sep" style="left:39px;top:974px;height:14px"></div>
<svg style="left:55px;top:976px" width="9" height="10" viewBox="0 0 9 10"><path d="M.8.300v9.400M8 .3L3.400 5 8 9.700" class="ic" style="stroke-width:1.200"/></svg>
<svg style="left:89px;top:976px" width="6" height="10" viewBox="0 0 6 10"><path d="M5.200.3L.8 5l4.400 4.700" class="ic" style="stroke-width:1.200"/></svg>
<div class="box" style="left:112px;top:971px;width:110px;height:20px;border-color:#cdcdcd;border-radius:4px"></div>
<div class="t" style="left:112px;top:973px;width:110px;text-align:center;font-size:12.500px">63/66</div>
<svg style="left:240px;top:976px" width="6" height="10" viewBox="0 0 6 10"><path d="M.8.300L5.200 5 .8 9.700" class="ic" style="stroke-width:1.200"/></svg>
<svg style="left:270px;top:976px" width="9" height="10" viewBox="0 0 9 10"><path d="M8.200.300v9.400M1 .3L5.600 5 1 9.700" class="ic" style="stroke-width:1.200"/></svg>

<svg style="left:695px;top:976px" width="15" height="10" viewBox="0 0 15 10"><path d="M.6 5Q3.600.6 7.500.6T14.400 5Q11.400 9.400 7.500 9.400T.6 5z" class="ic" style="stroke-width:1.100"/><circle cx="7.500" cy="5" r="2" class="ic" style="stroke-width:1.100"/></svg>
<svg style="left:715px;top:979px" width="7" height="5" viewBox="0 0 7 5"><path d="M.8.800L3.500 3.600 6.200.8" class="ic" style="stroke-width:1.300"/></svg>
<div class="sep" style="left:736px;top:974px;height:14px"></div>
<div class="a" style="left:745px;top:970px;width:24px;height:22px;background:#dcdcdc;border-radius:3px"></div>
<svg style="left:751px;top:974px" width="13" height="13" viewBox="0 0 13 13"><path d="M.6.300V4h11.800V.3M.6 12.700V9h11.800v3.700" class="ic" style="stroke-width:1.200"/></svg>
<div class="sep" style="left:777px;top:974px;height:14px"></div>
<svg style="left:792px;top:974px" width="12" height="13" viewBox="0 0 12 13"><rect x=".6" y=".6" width="10.800" height="11.800" rx=".8" class="ic" style="stroke-width:1.100"/><path d="M3.200 4.200h5.600M3.200 7h3.400" class="ic" style="stroke-width:1.100"/></svg>
<div class="a" style="left:818px;top:970px;width:24px;height:22px;background:#dcdcdc;border-radius:3px"></div>
<svg style="left:824px;top:974px" width="12" height="13" viewBox="0 0 12 13"><rect x=".6" y=".6" width="3.800" height="11.800" rx=".6" class="ic" style="stroke-width:1.100"/><rect x="7.600" y=".6" width="3.800" height="11.800" rx=".6" class="ic" style="stroke-width:1.100"/></svg>
<div class="sep" style="left:850px;top:974px;height:14px"></div>
<div class="a" style="left:861px;top:972px;width:20px;height:18px;background:#db3158;border-radius:4px"></div>
<svg style="left:867px;top:976px" width="8" height="10" viewBox="0 0 8 10"><path d="M.6.800v8.400L7.600 5z" fill="#fff"/></svg>
<div class="sep" style="left:892px;top:974px;height:14px"></div>
<svg style="left:906px;top:974px" width="13" height="12" viewBox="0 0 13 12"><rect x=".6" y=".6" width="11.800" height="10.800" rx=".6" class="ic" style="stroke-width:1.100"/><path d="M3.800 3.400v5.200M9.200 3.400v5.200" class="ic" style="stroke-width:1"/><circle cx="6.500" cy="4.600" r=".6" fill="#2b2b2b"/><circle cx="6.500" cy="7.400" r=".6" fill="#2b2b2b"/></svg>
<svg style="left:938px;top:974px" width="13" height="13" viewBox="0 0 13 13"><path d="M.6 3.400V.6h2.800M9.600.6h2.800v2.800M12.400 9.600v2.800H9.600M3.400 12.400H.6V9.600" class="ic" style="stroke-width:1.200"/><rect x="3.400" y="3" width="6.200" height="7" class="ic" style="stroke-width:1.100"/></svg>
<svg style="left:969px;top:974px" width="14" height="13" viewBox="0 0 14 13"><path d="M2.400 8.400V.6h9.200v7.800" class="ic" style="stroke-width:1.100"/><path d="M.8 10.800h12.400M2.800 9l-2 1.800 2 1.800M11.200 9l2 1.800-2 1.800" class="ic" style="stroke-width:1.100"/></svg>
<div class="sep" style="left:996px;top:974px;height:14px"></div>
<div class="t" style="left:1016px;top:973px;font-size:12.500px">25%</div>
<svg style="left:1056px;top:979px" width="7" height="5" viewBox="0 0 7 5"><path d="M.8.800L3.500 3.600 6.200.8" class="ic" style="stroke-width:1.300"/></svg>
<div class="a" style="left:1081px;top:980px;width:11px;height:2px;background:#222"></div>
<div class="a" style="left:1106px;top:980px;width:106px;height:1.500px;background:#c4c4c4"></div>
<div class="a" style="left:1106px;top:980px;width:14px;height:2px;background:#2b5fcf"></div>
<div class="a" style="left:1118px;top:975.500px;width:11px;height:11px;border-radius:50%;background:#fff"></div>
<div class="a" style="left:1120px;top:977.500px;width:7px;height:7px;border-radius:50%;background:#9a9a9a"></div>
<div class="a" style="left:1227px;top:980px;width:10px;height:2px;background:#222"></div>
<div class="a" style="left:1231px;top:976px;width:2px;height:10px;background:#222"></div>
<svg style="left:1258px;top:974px" width="14" height="14" viewBox="0 0 14 14"><path d="M.6 4V.6H4M10 .6h3.400V4M13.400 10v3.400H10M4 13.400H.6V10M12.600 1.400L8.400 5.600M1.400 12.600l4.200-4.200" class="ic" style="stroke-width:1.200"/></svg>
<!--WM-->
<svg id="wm" style="left:0;top:0;pointer-events:none" width="1287" height="992" viewBox="0 0 1287 992">
<defs><filter id="wmf" x="-2%" y="-2%" width="104%" height="104%"><feGaussianBlur in="SourceGraphic" stdDeviation="0.9"/></filter>
<filter id="wms" x="-2%" y="-2%" width="104%" height="104%"><feGaussianBlur stdDeviation="2.2"/></filter>
<clipPath id="wml"><path clip-rule="evenodd" d="M0 0H1287V992H0zM256 142h397v212h-397zM671 142h397v212h-397zM256 372h397v281h-397zM671 372h397v281h-397zM256 671h397v280h-397zM671 671h397v280h-397z"/></clipPath></defs>
<g filter="url(#wms)" opacity=".075" fill="#000" stroke="#000" stroke-width="4" clip-path="url(#wml)"><path d="M-639.0 -119.7L-617.6 -93.1L-124.6 451.7L-100.3 475.6L-99.5 474.9L-120.9 448.4L-613.9 -96.5L-638.2 -120.3zM-33.2 549.8L-11.8 576.3L240.8 855.4L265.1 879.3L265.8 878.6L244.5 852.1L-8.1 572.9L-32.4 549.1zM332.2 953.4L353.5 980.0L458.9 1096.5L483.2 1120.3L483.9 1119.7L462.6 1093.1L357.2 976.6L332.9 952.8zM-274.0 -119.7L-252.6 -93.1L67.0 260.1L91.3 284.0L92.1 283.3L70.8 256.8L-248.9 -96.5L-273.2 -120.3zM158.4 358.1L179.8 384.7L432.4 663.8L456.7 687.7L457.4 687.0L436.1 660.5L183.5 381.3L159.2 357.5zM523.8 761.8L545.1 788.4L792.0 1061.2L816.3 1085.1L817.0 1084.4L795.7 1057.8L548.8 785.0L524.5 761.2zM91.0 -119.7L112.4 -93.1L258.6 68.5L282.9 92.4L283.7 91.7L262.4 65.2L116.1 -96.5L91.8 -120.3zM350.0 166.5L371.4 193.1L624.0 472.2L648.3 496.1L649.0 495.4L627.7 468.9L375.1 189.7L350.8 165.9zM715.4 570.2L736.7 596.8L983.6 869.6L1007.9 893.5L1008.6 892.8L987.3 866.2L740.4 593.4L716.1 569.6zM1075.0 967.6L1096.3 994.2L1188.9 1096.5L1213.2 1120.3L1213.9 1119.7L1192.6 1093.1L1100.0 990.8L1075.7 966.9zM457.0 -119.7L464.6 -108.4L464.6 -108.4L475.1 -99.7L475.8 -100.4L468.3 -111.7L468.3 -111.7L457.8 -120.3zM542.2 -25.6L563.5 1.0L816.1 280.1L840.4 303.9L841.1 303.3L819.8 276.7L567.2 -2.4L542.9 -26.3zM907.5 378.1L928.8 404.6L1175.7 677.5L1200.0 701.3L1200.8 700.7L1179.4 674.1L932.5 401.3L908.2 377.4zM1267.1 775.5L1288.4 802.0L1554.9 1096.5L1579.2 1120.3L1579.9 1119.7L1558.6 1093.1L1292.2 798.7L1267.9 774.8zM822.0 -119.7L843.4 -93.1L1007.7 88.5L1032.0 112.3L1032.7 111.7L1011.4 85.1L847.1 -96.5L822.8 -120.3zM1099.1 186.5L1120.4 213.0L1367.3 485.9L1391.6 509.7L1392.4 509.1L1371.0 482.5L1124.1 209.7L1099.8 185.8zM1458.7 583.9L1480.0 610.4L1919.9 1096.5L1944.2 1120.3L1944.9 1119.7L1923.6 1093.1L1483.8 607.1L1459.5 583.2zM1188.0 -119.7L1204.6 -98.4L1204.6 -98.4L1224.1 -79.8L1224.9 -80.5L1208.3 -101.7L1208.3 -101.7L1188.8 -120.3zM1291.2 -5.6L1312.6 20.9L1559.4 293.7L1583.7 317.6L1584.5 316.9L1563.2 290.4L1316.3 17.6L1292.0 -6.3zM1650.8 391.7L1672.2 418.3L2285.9 1096.5L2310.2 1120.3L2310.9 1119.7L2289.6 1093.1L1675.9 414.9L1651.6 391.1zM-1519.6 1120.4L-1494.2 1097.7L-525.9 129.4L-503.2 104.0L-504.0 103.2L-529.4 125.9L-1497.7 1094.2L-1520.4 1119.6zM-432.5 33.2L-407.1 10.6L-334.3 -62.2L-311.6 -87.7L-312.3 -88.4L-337.8 -65.7L-410.6 7.1L-433.2 32.5zM-240.9 -158.4L-215.5 -181.0L-142.7 -253.8L-120.0 -279.3L-120.7 -280.0L-146.2 -257.3L-219.0 -184.5L-241.6 -159.1zM-49.3 -350.0L-23.9 -372.6L49.5 -445.9L72.1 -471.4L71.4 -472.1L45.9 -449.5L-27.4 -376.1L-50.0 -350.7zM142.8 -542.1L168.3 -564.7L241.1 -637.5L263.7 -663.0L263.0 -663.7L237.5 -641.1L164.7 -568.3L142.1 -542.8zM334.4 -733.7L359.9 -756.3L433.2 -829.7L455.8 -855.1L455.1 -855.8L429.7 -833.2L356.3 -759.9L333.7 -734.4zM-673.6 1120.4L-648.2 1097.7L543.7 -94.2L566.4 -119.6L565.6 -120.4L540.2 -97.7L-651.7 1094.2L-674.4 1119.6zM-294.6 1120.4L-269.2 1097.7L56.1 772.5L78.7 747.0L78.0 746.3L52.5 768.9L-272.7 1094.2L-295.4 1119.6zM149.4 676.3L174.9 653.7L247.7 580.9L270.3 555.4L269.6 554.7L244.1 577.3L171.3 650.1L148.7 675.6zM341.0 484.7L366.5 462.1L439.3 389.3L461.9 363.8L461.2 363.1L435.7 385.7L362.9 458.5L340.3 484.0zM532.6 293.1L558.1 270.5L631.4 197.1L654.0 171.7L653.3 171.0L627.9 193.6L554.5 266.9L531.9 292.4zM724.7 101.0L750.2 78.3L823.0 5.5L845.6 -19.9L844.9 -20.6L819.5 2.0L746.7 74.8L724.0 100.3zM916.4 -90.6L941.8 -113.3L1015.1 -186.6L1037.8 -212.1L1037.1 -212.8L1011.6 -190.1L938.3 -116.8L915.6 -91.4zM95.4 1120.4L120.8 1097.7L1312.7 -94.2L1335.4 -119.6L1334.6 -120.4L1309.2 -97.7L117.3 1094.2L94.6 1119.6zM514.3 1079.4L539.7 1056.8L612.5 984.0L635.2 958.6L634.4 957.8L609.0 980.5L536.2 1053.3L513.6 1078.7zM705.9 887.8L731.3 865.2L804.1 792.4L826.8 767.0L826.0 766.2L800.6 788.9L727.8 861.7L705.2 887.1zM897.5 696.2L922.9 673.6L996.3 600.3L1018.9 574.8L1018.2 574.1L992.7 596.7L919.4 670.1L896.8 695.5zM1089.6 504.1L1115.1 481.5L1187.9 408.7L1210.5 383.2L1209.8 382.5L1184.3 405.1L1111.5 477.9L1088.9 503.4zM1281.2 312.5L1306.7 289.9L1380.0 216.5L1402.6 191.1L1401.9 190.4L1376.5 213.0L1303.1 286.3L1280.5 311.8zM1473.3 120.4L1498.8 97.8L1690.7 -94.2L1713.4 -119.6L1712.6 -120.4L1687.2 -97.7L1495.2 94.2L1472.6 119.7zM852.4 1120.4L877.8 1097.7L2069.7 -94.2L2092.4 -119.6L2091.6 -120.4L2066.2 -97.7L874.3 1094.2L851.6 1119.6zM1258.0 1094.7L1283.5 1072.0L1356.8 998.7L1379.5 973.3L1378.7 972.5L1353.3 995.2L1280.0 1068.5L1257.3 1094.0zM1450.2 902.5L1475.6 879.9L1548.4 807.1L1571.1 781.6L1570.4 780.9L1544.9 803.6L1472.1 876.4L1449.5 901.8zM1641.8 710.9L1667.2 688.3L1740.6 615.0L1763.2 589.5L1762.5 588.8L1737.0 611.4L1663.7 684.8L1641.1 710.2zM1833.9 518.8L1859.4 496.2L2449.7 -94.2L2472.4 -119.6L2471.6 -120.4L2446.2 -97.7L1855.8 492.6L1833.2 518.1z"/>
<text x="123" y="141" font-family="Liberation Sans,Noto Sans CJK SC,sans-serif" font-size="46" font-weight="500" text-anchor="middle">易</text>
<text x="498" y="159" font-family="Liberation Sans,Noto Sans CJK SC,sans-serif" font-size="46" font-weight="500" text-anchor="middle">易</text>
<text x="867" y="163" font-family="Liberation Sans,Noto Sans CJK SC,sans-serif" font-size="46" font-weight="500" text-anchor="middle">易</text>
<text x="1238" y="151" font-family="Liberation Sans,Noto Sans CJK SC,sans-serif" font-size="46" font-weight="500" text-anchor="middle">易</text>
<text x="306" y="364" font-family="Liberation Sans,Noto Sans CJK SC,sans-serif" font-size="46" font-weight="500" text-anchor="middle">易</text>
<text x="687" y="362" font-family="Liberation Sans,Noto Sans CJK SC,sans-serif" font-size="46" font-weight="500" text-anchor="middle">易</text>
<text x="1056" y="362" font-family="Liberation Sans,Noto Sans CJK SC,sans-serif" font-size="46" font-weight="500" text-anchor="middle">易</text>
<text x="125" y="536" font-family="Liberation Sans,Noto Sans CJK SC,sans-serif" font-size="46" font-weight="500" text-anchor="middle">易</text>
<text x="498" y="556" font-family="Liberation Sans,Noto Sans CJK SC,sans-serif" font-size="46" font-weight="500" text-anchor="middle">易</text>
<text x="869" y="557" font-family="Liberation Sans,Noto Sans CJK SC,sans-serif" font-size="46" font-weight="500" text-anchor="middle">易</text>
<text x="1240" y="556" font-family="Liberation Sans,Noto Sans CJK SC,sans-serif" font-size="46" font-weight="500" text-anchor="middle">易</text>
<text x="307" y="743" font-family="Liberation Sans,Noto Sans CJK SC,sans-serif" font-size="46" font-weight="500" text-anchor="middle">易</text>
<text x="680" y="749" font-family="Liberation Sans,Noto Sans CJK SC,sans-serif" font-size="46" font-weight="500" text-anchor="middle">易</text>
<text x="1049" y="749" font-family="Liberation Sans,Noto Sans CJK SC,sans-serif" font-size="46" font-weight="500" text-anchor="middle">易</text>
<text x="120" y="921" font-family="Liberation Sans,Noto Sans CJK SC,sans-serif" font-size="46" font-weight="500" text-anchor="middle">易</text>
<text x="496" y="940" font-family="Liberation Sans,Noto Sans CJK SC,sans-serif" font-size="46" font-weight="500" text-anchor="middle">易</text>
<text x="865" y="943" font-family="Liberation Sans,Noto Sans CJK SC,sans-serif" font-size="46" font-weight="500" text-anchor="middle">易</text>
<text x="1235" y="938" font-family="Liberation Sans,Noto Sans CJK SC,sans-serif" font-size="46" font-weight="500" text-anchor="middle">易</text>
<text x="-65" y="362" font-family="Liberation Sans,Noto Sans CJK SC,sans-serif" font-size="46" font-weight="500" text-anchor="middle">易</text>
<text x="-60" y="749" font-family="Liberation Sans,Noto Sans CJK SC,sans-serif" font-size="46" font-weight="500" text-anchor="middle">易</text>
<text transform="translate(-66.3 512.3) rotate(47.9)" x="0" y="7" font-family="Liberation Sans,Noto Sans CJK SC,sans-serif" font-size="28" text-anchor="middle" textLength="90">yitu.cn</text>
<text transform="translate(299.0 916.0) rotate(47.9)" x="0" y="7" font-family="Liberation Sans,Noto Sans CJK SC,sans-serif" font-size="28" text-anchor="middle" textLength="90">yitu.cn</text>
<text transform="translate(125.3 320.7) rotate(47.9)" x="0" y="7" font-family="Liberation Sans,Noto Sans CJK SC,sans-serif" font-size="28" text-anchor="middle" textLength="90">yitu.cn</text>
<text transform="translate(490.6 724.4) rotate(47.9)" x="0" y="7" font-family="Liberation Sans,Noto Sans CJK SC,sans-serif" font-size="28" text-anchor="middle" textLength="90">yitu.cn</text>
<text transform="translate(316.9 129.1) rotate(47.9)" x="0" y="7" font-family="Liberation Sans,Noto Sans CJK SC,sans-serif" font-size="28" text-anchor="middle" textLength="90">yitu.cn</text>
<text transform="translate(682.2 532.8) rotate(47.9)" x="0" y="7" font-family="Liberation Sans,Noto Sans CJK SC,sans-serif" font-size="28" text-anchor="middle" textLength="90">yitu.cn</text>
<text transform="translate(1041.8 930.2) rotate(47.9)" x="0" y="7" font-family="Liberation Sans,Noto Sans CJK SC,sans-serif" font-size="28" text-anchor="middle" textLength="90">yitu.cn</text>
<text transform="translate(509.0 -63.0) rotate(47.9)" x="0" y="7" font-family="Liberation Sans,Noto Sans CJK SC,sans-serif" font-size="28" text-anchor="middle" textLength="90">yitu.cn</text>
<text transform="translate(874.3 340.7) rotate(47.9)" x="0" y="7" font-family="Liberation Sans,Noto Sans CJK SC,sans-serif" font-size="28" text-anchor="middle" textLength="90">yitu.cn</text>
<text transform="translate(1233.9 738.1) rotate(47.9)" x="0" y="7" font-family="Liberation Sans,Noto Sans CJK SC,sans-serif" font-size="28" text-anchor="middle" textLength="90">yitu.cn</text>
<text transform="translate(1065.9 149.1) rotate(47.9)" x="0" y="7" font-family="Liberation Sans,Noto Sans CJK SC,sans-serif" font-size="28" text-anchor="middle" textLength="90">yitu.cn</text>
<text transform="translate(1258.0 -43.0) rotate(47.9)" x="0" y="7" font-family="Liberation Sans,Noto Sans CJK SC,sans-serif" font-size="28" text-anchor="middle" textLength="90">yitu.cn</text>
<text transform="translate(113.7 711.3) rotate(-45.0)" x="0" y="7" font-family="Liberation Sans,Noto Sans CJK SC,sans-serif" font-size="28" text-anchor="middle" textLength="90">yitu.cn</text>
<text transform="translate(305.3 519.7) rotate(-45.0)" x="0" y="7" font-family="Liberation Sans,Noto Sans CJK SC,sans-serif" font-size="28" text-anchor="middle" textLength="90">yitu.cn</text>
<text transform="translate(496.9 328.1) rotate(-45.0)" x="0" y="7" font-family="Liberation Sans,Noto Sans CJK SC,sans-serif" font-size="28" text-anchor="middle" textLength="90">yitu.cn</text>
<text transform="translate(689.0 136.0) rotate(-45.0)" x="0" y="7" font-family="Liberation Sans,Noto Sans CJK SC,sans-serif" font-size="28" text-anchor="middle" textLength="90">yitu.cn</text>
<text transform="translate(880.6 -55.6) rotate(-45.0)" x="0" y="7" font-family="Liberation Sans,Noto Sans CJK SC,sans-serif" font-size="28" text-anchor="middle" textLength="90">yitu.cn</text>
<text transform="translate(670.2 922.8) rotate(-45.0)" x="0" y="7" font-family="Liberation Sans,Noto Sans CJK SC,sans-serif" font-size="28" text-anchor="middle" textLength="90">yitu.cn</text>
<text transform="translate(861.8 731.2) rotate(-45.0)" x="0" y="7" font-family="Liberation Sans,Noto Sans CJK SC,sans-serif" font-size="28" text-anchor="middle" textLength="90">yitu.cn</text>
<text transform="translate(1053.9 539.1) rotate(-45.0)" x="0" y="7" font-family="Liberation Sans,Noto Sans CJK SC,sans-serif" font-size="28" text-anchor="middle" textLength="90">yitu.cn</text>
<text transform="translate(1245.5 347.5) rotate(-45.0)" x="0" y="7" font-family="Liberation Sans,Noto Sans CJK SC,sans-serif" font-size="28" text-anchor="middle" textLength="90">yitu.cn</text>
<text x="1078.500" y="875.500" font-family="Liberation Sans,Noto Sans CJK SC,sans-serif" font-size="73" font-weight="900" text-anchor="middle" textLength="234" lengthAdjust="spacingAndGlyphs">易图网</text>
</g>
<g filter="url(#wmf)" fill="#fff">
<path d="M-639.0 -119.7L-617.6 -93.1L-124.6 451.7L-100.3 475.6L-99.5 474.9L-120.9 448.4L-613.9 -96.5L-638.2 -120.3zM-33.2 549.8L-11.8 576.3L240.8 855.4L265.1 879.3L265.8 878.6L244.5 852.1L-8.1 572.9L-32.4 549.1zM332.2 953.4L353.5 980.0L458.9 1096.5L483.2 1120.3L483.9 1119.7L462.6 1093.1L357.2 976.6L332.9 952.8zM-274.0 -119.7L-252.6 -93.1L67.0 260.1L91.3 284.0L92.1 283.3L70.8 256.8L-248.9 -96.5L-273.2 -120.3zM158.4 358.1L179.8 384.7L432.4 663.8L456.7 687.7L457.4 687.0L436.1 660.5L183.5 381.3L159.2 357.5zM523.8 761.8L545.1 788.4L792.0 1061.2L816.3 1085.1L817.0 1084.4L795.7 1057.8L548.8 785.0L524.5 761.2zM91.0 -119.7L112.4 -93.1L258.6 68.5L282.9 92.4L283.7 91.7L262.4 65.2L116.1 -96.5L91.8 -120.3zM350.0 166.5L371.4 193.1L624.0 472.2L648.3 496.1L649.0 495.4L627.7 468.9L375.1 189.7L350.8 165.9zM715.4 570.2L736.7 596.8L983.6 869.6L1007.9 893.5L1008.6 892.8L987.3 866.2L740.4 593.4L716.1 569.6zM1075.0 967.6L1096.3 994.2L1188.9 1096.5L1213.2 1120.3L1213.9 1119.7L1192.6 1093.1L1100.0 990.8L1075.7 966.9zM457.0 -119.7L464.6 -108.4L464.6 -108.4L475.1 -99.7L475.8 -100.4L468.3 -111.7L468.3 -111.7L457.8 -120.3zM542.2 -25.6L563.5 1.0L816.1 280.1L840.4 303.9L841.1 303.3L819.8 276.7L567.2 -2.4L542.9 -26.3zM907.5 378.1L928.8 404.6L1175.7 677.5L1200.0 701.3L1200.8 700.7L1179.4 674.1L932.5 401.3L908.2 377.4zM1267.1 775.5L1288.4 802.0L1554.9 1096.5L1579.2 1120.3L1579.9 1119.7L1558.6 1093.1L1292.2 798.7L1267.9 774.8zM822.0 -119.7L843.4 -93.1L1007.7 88.5L1032.0 112.3L1032.7 111.7L1011.4 85.1L847.1 -96.5L822.8 -120.3zM1099.1 186.5L1120.4 213.0L1367.3 485.9L1391.6 509.7L1392.4 509.1L1371.0 482.5L1124.1 209.7L1099.8 185.8zM1458.7 583.9L1480.0 610.4L1919.9 1096.5L1944.2 1120.3L1944.9 1119.7L1923.6 1093.1L1483.8 607.1L1459.5 583.2zM1188.0 -119.7L1204.6 -98.4L1204.6 -98.4L1224.1 -79.8L1224.9 -80.5L1208.3 -101.7L1208.3 -101.7L1188.8 -120.3zM1291.2 -5.6L1312.6 20.9L1559.4 293.7L1583.7 317.6L1584.5 316.9L1563.2 290.4L1316.3 17.6L1292.0 -6.3zM1650.8 391.7L1672.2 418.3L2285.9 1096.5L2310.2 1120.3L2310.9 1119.7L2289.6 1093.1L1675.9 414.9L1651.6 391.1zM-1519.6 1120.4L-1494.2 1097.7L-525.9 129.4L-503.2 104.0L-504.0 103.2L-529.4 125.9L-1497.7 1094.2L-1520.4 1119.6zM-432.5 33.2L-407.1 10.6L-334.3 -62.2L-311.6 -87.7L-312.3 -88.4L-337.8 -65.7L-410.6 7.1L-433.2 32.5zM-240.9 -158.4L-215.5 -181.0L-142.7 -253.8L-120.0 -279.3L-120.7 -280.0L-146.2 -257.3L-219.0 -184.5L-241.6 -159.1zM-49.3 -350.0L-23.9 -372.6L49.5 -445.9L72.1 -471.4L71.4 -472.1L45.9 -449.5L-27.4 -376.1L-50.0 -350.7zM142.8 -542.1L168.3 -564.7L241.1 -637.5L263.7 -663.0L263.0 -663.7L237.5 -641.1L164.7 -568.3L142.1 -542.8zM334.4 -733.7L359.9 -756.3L433.2 -829.7L455.8 -855.1L455.1 -855.8L429.7 -833.2L356.3 -759.9L333.7 -734.4zM-673.6 1120.4L-648.2 1097.7L543.7 -94.2L566.4 -119.6L565.6 -120.4L540.2 -97.7L-651.7 1094.2L-674.4 1119.6zM-294.6 1120.4L-269.2 1097.7L56.1 772.5L78.7 747.0L78.0 746.3L52.5 768.9L-272.7 1094.2L-295.4 1119.6zM149.4 676.3L174.9 653.7L247.7 580.9L270.3 555.4L269.6 554.7L244.1 577.3L171.3 650.1L148.7 675.6zM341.0 484.7L366.5 462.1L439.3 389.3L461.9 363.8L461.2 363.1L435.7 385.7L362.9 458.5L340.3 484.0zM532.6 293.1L558.1 270.5L631.4 197.1L654.0 171.7L653.3 171.0L627.9 193.6L554.5 266.9L531.9 292.4zM724.7 101.0L750.2 78.3L823.0 5.5L845.6 -19.9L844.9 -20.6L819.5 2.0L746.7 74.8L724.0 100.3zM916.4 -90.6L941.8 -113.3L1015.1 -186.6L1037.8 -212.1L1037.1 -212.8L1011.6 -190.1L938.3 -116.8L915.6 -91.4zM95.4 1120.4L120.8 1097.7L1312.7 -94.2L1335.4 -119.6L1334.6 -120.4L1309.2 -97.7L117.3 1094.2L94.6 1119.6zM514.3 1079.4L539.7 1056.8L612.5 984.0L635.2 958.6L634.4 957.8L609.0 980.5L536.2 1053.3L513.6 1078.7zM705.9 887.8L731.3 865.2L804.1 792.4L826.8 767.0L826.0 766.2L800.6 788.9L727.8 861.7L705.2 887.1zM897.5 696.2L922.9 673.6L996.3 600.3L1018.9 574.8L1018.2 574.1L992.7 596.7L919.4 670.1L896.8 695.5zM1089.6 504.1L1115.1 481.5L1187.9 408.7L1210.5 383.2L1209.8 382.5L1184.3 405.1L1111.5 477.9L1088.9 503.4zM1281.2 312.5L1306.7 289.9L1380.0 216.5L1402.6 191.1L1401.9 190.4L1376.5 213.0L1303.1 286.3L1280.5 311.8zM1473.3 120.4L1498.8 97.8L1690.7 -94.2L1713.4 -119.6L1712.6 -120.4L1687.2 -97.7L1495.2 94.2L1472.6 119.7zM852.4 1120.4L877.8 1097.7L2069.7 -94.2L2092.4 -119.6L2091.6 -120.4L2066.2 -97.7L874.3 1094.2L851.6 1119.6zM1258.0 1094.7L1283.5 1072.0L1356.8 998.7L1379.5 973.3L1378.7 972.5L1353.3 995.2L1280.0 1068.5L1257.3 1094.0zM1450.2 902.5L1475.6 879.9L1548.4 807.1L1571.1 781.6L1570.4 780.9L1544.9 803.6L1472.1 876.4L1449.5 901.8zM1641.8 710.9L1667.2 688.3L1740.6 615.0L1763.2 589.5L1762.5 588.8L1737.0 611.4L1663.7 684.8L1641.1 710.2zM1833.9 518.8L1859.4 496.2L2449.7 -94.2L2472.4 -119.6L2471.6 -120.4L2446.2 -97.7L1855.8 492.6L1833.2 518.1z" opacity=".40"/>
<text x="123" y="141" font-family="Liberation Sans,Noto Sans CJK SC,sans-serif" font-size="46" font-weight="500" text-anchor="middle" opacity=".37">易</text>
<text x="498" y="159" font-family="Liberation Sans,Noto Sans CJK SC,sans-serif" font-size="46" font-weight="500" text-anchor="middle" opacity=".37">易</text>
<text x="867" y="163" font-family="Liberation Sans,Noto Sans CJK SC,sans-serif" font-size="46" font-weight="500" text-anchor="middle" opacity=".37">易</text>
<text x="1238" y="151" font-family="Liberation Sans,Noto Sans CJK SC,sans-serif" font-size="46" font-weight="500" text-anchor="middle" opacity=".37">易</text>
<text x="306" y="364" font-family="Liberation Sans,Noto Sans CJK SC,sans-serif" font-size="46" font-weight="500" text-anchor="middle" opacity=".37">易</text>
<text x="687" y="362" font-family="Liberation Sans,Noto Sans CJK SC,sans-serif" font-size="46" font-weight="500" text-anchor="middle" opacity=".37">易</text>
<text x="1056" y="362" font-family="Liberation Sans,Noto Sans CJK SC,sans-serif" font-size="46" font-weight="500" text-anchor="middle" opacity=".37">易</text>
<text x="125" y="536" font-family="Liberation Sans,Noto Sans CJK SC,sans-serif" font-size="46" font-weight="500" text-anchor="middle" opacity=".37">易</text>
<text x="498" y="556" font-family="Liberation Sans,Noto Sans CJK SC,sans-serif" font-size="46" font-weight="500" text-anchor="middle" opacity=".37">易</text>
<text x="869" y="557" font-family="Liberation Sans,Noto Sans CJK SC,sans-serif" font-size="46" font-weight="500" text-anchor="middle" opacity=".37">易</text>
<text x="1240" y="556" font-family="Liberation Sans,Noto Sans CJK SC,sans-serif" font-size="46" font-weight="500" text-anchor="middle" opacity=".37">易</text>
<text x="307" y="743" font-family="Liberation Sans,Noto Sans CJK SC,sans-serif" font-size="46" font-weight="500" text-anchor="middle" opacity=".37">易</text>
<text x="680" y="749" font-family="Liberation Sans,Noto Sans CJK SC,sans-serif" font-size="46" font-weight="500" text-anchor="middle" opacity=".37">易</text>
<text x="1049" y="749" font-family="Liberation Sans,Noto Sans CJK SC,sans-serif" font-size="46" font-weight="500" text-anchor="middle" opacity=".37">易</text>
<text x="120" y="921" font-family="Liberation Sans,Noto Sans CJK SC,sans-serif" font-size="46" font-weight="500" text-anchor="middle" opacity=".37">易</text>
<text x="496" y="940" font-family="Liberation Sans,Noto Sans CJK SC,sans-serif" font-size="46" font-weight="500" text-anchor="middle" opacity=".37">易</text>
<text x="865" y="943" font-family="Liberation Sans,Noto Sans CJK SC,sans-serif" font-size="46" font-weight="500" text-anchor="middle" opacity=".37">易</text>
<text x="1235" y="938" font-family="Liberation Sans,Noto Sans CJK SC,sans-serif" font-size="46" font-weight="500" text-anchor="middle" opacity=".37">易</text>
<text x="-65" y="362" font-family="Liberation Sans,Noto Sans CJK SC,sans-serif" font-size="46" font-weight="500" text-anchor="middle" opacity=".37">易</text>
<text x="-60" y="749" font-family="Liberation Sans,Noto Sans CJK SC,sans-serif" font-size="46" font-weight="500" text-anchor="middle" opacity=".37">易</text>
<text transform="translate(-66.3 512.3) rotate(47.9)" x="0" y="7" font-family="Liberation Sans,Noto Sans CJK SC,sans-serif" font-size="28" text-anchor="middle" textLength="90" opacity=".40">yitu.cn</text>
<text transform="translate(299.0 916.0) rotate(47.9)" x="0" y="7" font-family="Liberation Sans,Noto Sans CJK SC,sans-serif" font-size="28" text-anchor="middle" textLength="90" opacity=".40">yitu.cn</text>
<text transform="translate(125.3 320.7) rotate(47.9)" x="0" y="7" font-family="Liberation Sans,Noto Sans CJK SC,sans-serif" font-size="28" text-anchor="middle" textLength="90" opacity=".40">yitu.cn</text>
<text transform="translate(490.6 724.4) rotate(47.9)" x="0" y="7" font-family="Liberation Sans,Noto Sans CJK SC,sans-serif" font-size="28" text-anchor="middle" textLength="90" opacity=".40">yitu.cn</text>
<text transform="translate(316.9 129.1) rotate(47.9)" x="0" y="7" font-family="Liberation Sans,Noto Sans CJK SC,sans-serif" font-size="28" text-anchor="middle" textLength="90" opacity=".40">yitu.cn</text>
<text transform="translate(682.2 532.8) rotate(47.9)" x="0" y="7" font-family="Liberation Sans,Noto Sans CJK SC,sans-serif" font-size="28" text-anchor="middle" textLength="90" opacity=".40">yitu.cn</text>
<text transform="translate(1041.8 930.2) rotate(47.9)" x="0" y="7" font-family="Liberation Sans,Noto Sans CJK SC,sans-serif" font-size="28" text-anchor="middle" textLength="90" opacity=".40">yitu.cn</text>
<text transform="translate(509.0 -63.0) rotate(47.9)" x="0" y="7" font-family="Liberation Sans,Noto Sans CJK SC,sans-serif" font-size="28" text-anchor="middle" textLength="90" opacity=".40">yitu.cn</text>
<text transform="translate(874.3 340.7) rotate(47.9)" x="0" y="7" font-family="Liberation Sans,Noto Sans CJK SC,sans-serif" font-size="28" text-anchor="middle" textLength="90" opacity=".40">yitu.cn</text>
<text transform="translate(1233.9 738.1) rotate(47.9)" x="0" y="7" font-family="Liberation Sans,Noto Sans CJK SC,sans-serif" font-size="28" text-anchor="middle" textLength="90" opacity=".40">yitu.cn</text>
<text transform="translate(1065.9 149.1) rotate(47.9)" x="0" y="7" font-family="Liberation Sans,Noto Sans CJK SC,sans-serif" font-size="28" text-anchor="middle" textLength="90" opacity=".40">yitu.cn</text>
<text transform="translate(1258.0 -43.0) rotate(47.9)" x="0" y="7" font-family="Liberation Sans,Noto Sans CJK SC,sans-serif" font-size="28" text-anchor="middle" textLength="90" opacity=".40">yitu.cn</text>
<text transform="translate(113.7 711.3) rotate(-45.0)" x="0" y="7" font-family="Liberation Sans,Noto Sans CJK SC,sans-serif" font-size="28" text-anchor="middle" textLength="90" opacity=".40">yitu.cn</text>
<text transform="translate(305.3 519.7) rotate(-45.0)" x="0" y="7" font-family="Liberation Sans,Noto Sans CJK SC,sans-serif" font-size="28" text-anchor="middle" textLength="90" opacity=".40">yitu.cn</text>
<text transform="translate(496.9 328.1) rotate(-45.0)" x="0" y="7" font-family="Liberation Sans,Noto Sans CJK SC,sans-serif" font-size="28" text-anchor="middle" textLength="90" opacity=".40">yitu.cn</text>
<text transform="translate(689.0 136.0) rotate(-45.0)" x="0" y="7" font-family="Liberation Sans,Noto Sans CJK SC,sans-serif" font-size="28" text-anchor="middle" textLength="90" opacity=".40">yitu.cn</text>
<text transform="translate(880.6 -55.6) rotate(-45.0)" x="0" y="7" font-family="Liberation Sans,Noto Sans CJK SC,sans-serif" font-size="28" text-anchor="middle" textLength="90" opacity=".40">yitu.cn</text>
<text transform="translate(670.2 922.8) rotate(-45.0)" x="0" y="7" font-family="Liberation Sans,Noto Sans CJK SC,sans-serif" font-size="28" text-anchor="middle" textLength="90" opacity=".40">yitu.cn</text>
<text transform="translate(861.8 731.2) rotate(-45.0)" x="0" y="7" font-family="Liberation Sans,Noto Sans CJK SC,sans-serif" font-size="28" text-anchor="middle" textLength="90" opacity=".40">yitu.cn</text>
<text transform="translate(1053.9 539.1) rotate(-45.0)" x="0" y="7" font-family="Liberation Sans,Noto Sans CJK SC,sans-serif" font-size="28" text-anchor="middle" textLength="90" opacity=".40">yitu.cn</text>
<text transform="translate(1245.5 347.5) rotate(-45.0)" x="0" y="7" font-family="Liberation Sans,Noto Sans CJK SC,sans-serif" font-size="28" text-anchor="middle" textLength="90" opacity=".40">yitu.cn</text>
<text x="1074.500" y="878.500" font-family="Liberation Sans,Noto Sans CJK SC,sans-serif" font-size="73" font-weight="900" text-anchor="middle" textLength="234" lengthAdjust="spacingAndGlyphs" fill="#ccc" opacity=".28">易图网</text>
<text x="1078.500" y="875.500" font-family="Liberation Sans,Noto Sans CJK SC,sans-serif" font-size="73" font-weight="900" text-anchor="middle" textLength="234" lengthAdjust="spacingAndGlyphs" opacity=".5">易图网</text>
</g>
<g filter="url(#wmf)" fill="#fff" clip-path="url(#wml)" opacity=".6" style="mix-blend-mode:overlay">
<path d="M-639.0 -119.7L-617.6 -93.1L-124.6 451.7L-100.3 475.6L-99.5 474.9L-120.9 448.4L-613.9 -96.5L-638.2 -120.3zM-33.2 549.8L-11.8 576.3L240.8 855.4L265.1 879.3L265.8 878.6L244.5 852.1L-8.1 572.9L-32.4 549.1zM332.2 953.4L353.5 980.0L458.9 1096.5L483.2 1120.3L483.9 1119.7L462.6 1093.1L357.2 976.6L332.9 952.8zM-274.0 -119.7L-252.6 -93.1L67.0 260.1L91.3 284.0L92.1 283.3L70.8 256.8L-248.9 -96.5L-273.2 -120.3zM158.4 358.1L179.8 384.7L432.4 663.8L456.7 687.7L457.4 687.0L436.1 660.5L183.5 381.3L159.2 357.5zM523.8 761.8L545.1 788.4L792.0 1061.2L816.3 1085.1L817.0 1084.4L795.7 1057.8L548.8 785.0L524.5 761.2zM91.0 -119.7L112.4 -93.1L258.6 68.5L282.9 92.4L283.7 91.7L262.4 65.2L116.1 -96.5L91.8 -120.3zM350.0 166.5L371.4 193.1L624.0 472.2L648.3 496.1L649.0 495.4L627.7 468.9L375.1 189.7L350.8 165.9zM715.4 570.2L736.7 596.8L983.6 869.6L1007.9 893.5L1008.6 892.8L987.3 866.2L740.4 593.4L716.1 569.6zM1075.0 967.6L1096.3 994.2L1188.9 1096.5L1213.2 1120.3L1213.9 1119.7L1192.6 1093.1L1100.0 990.8L1075.7 966.9zM457.0 -119.7L464.6 -108.4L464.6 -108.4L475.1 -99.7L475.8 -100.4L468.3 -111.7L468.3 -111.7L457.8 -120.3zM542.2 -25.6L563.5 1.0L816.1 280.1L840.4 303.9L841.1 303.3L819.8 276.7L567.2 -2.4L542.9 -26.3zM907.5 378.1L928.8 404.6L1175.7 677.5L1200.0 701.3L1200.8 700.7L1179.4 674.1L932.5 401.3L908.2 377.4zM1267.1 775.5L1288.4 802.0L1554.9 1096.5L1579.2 1120.3L1579.9 1119.7L1558.6 1093.1L1292.2 798.7L1267.9 774.8zM822.0 -119.7L843.4 -93.1L1007.7 88.5L1032.0 112.3L1032.7 111.7L1011.4 85.1L847.1 -96.5L822.8 -120.3zM1099.1 186.5L1120.4 213.0L1367.3 485.9L1391.6 509.7L1392.4 509.1L1371.0 482.5L1124.1 209.7L1099.8 185.8zM1458.7 583.9L1480.0 610.4L1919.9 1096.5L1944.2 1120.3L1944.9 1119.7L1923.6 1093.1L1483.8 607.1L1459.5 583.2zM1188.0 -119.7L1204.6 -98.4L1204.6 -98.4L1224.1 -79.8L1224.9 -80.5L1208.3 -101.7L1208.3 -101.7L1188.8 -120.3zM1291.2 -5.6L1312.6 20.9L1559.4 293.7L1583.7 317.6L1584.5 316.9L1563.2 290.4L1316.3 17.6L1292.0 -6.3zM1650.8 391.7L1672.2 418.3L2285.9 1096.5L2310.2 1120.3L2310.9 1119.7L2289.6 1093.1L1675.9 414.9L1651.6 391.1zM-1519.6 1120.4L-1494.2 1097.7L-525.9 129.4L-503.2 104.0L-504.0 103.2L-529.4 125.9L-1497.7 1094.2L-1520.4 1119.6zM-432.5 33.2L-407.1 10.6L-334.3 -62.2L-311.6 -87.7L-312.3 -88.4L-337.8 -65.7L-410.6 7.1L-433.2 32.5zM-240.9 -158.4L-215.5 -181.0L-142.7 -253.8L-120.0 -279.3L-120.7 -280.0L-146.2 -257.3L-219.0 -184.5L-241.6 -159.1zM-49.3 -350.0L-23.9 -372.6L49.5 -445.9L72.1 -471.4L71.4 -472.1L45.9 -449.5L-27.4 -376.1L-50.0 -350.7zM142.8 -542.1L168.3 -564.7L241.1 -637.5L263.7 -663.0L263.0 -663.7L237.5 -641.1L164.7 -568.3L142.1 -542.8zM334.4 -733.7L359.9 -756.3L433.2 -829.7L455.8 -855.1L455.1 -855.8L429.7 -833.2L356.3 -759.9L333.7 -734.4zM-673.6 1120.4L-648.2 1097.7L543.7 -94.2L566.4 -119.6L565.6 -120.4L540.2 -97.7L-651.7 1094.2L-674.4 1119.6zM-294.6 1120.4L-269.2 1097.7L56.1 772.5L78.7 747.0L78.0 746.3L52.5 768.9L-272.7 1094.2L-295.4 1119.6zM149.4 676.3L174.9 653.7L247.7 580.9L270.3 555.4L269.6 554.7L244.1 577.3L171.3 650.1L148.7 675.6zM341.0 484.7L366.5 462.1L439.3 389.3L461.9 363.8L461.2 363.1L435.7 385.7L362.9 458.5L340.3 484.0zM532.6 293.1L558.1 270.5L631.4 197.1L654.0 171.7L653.3 171.0L627.9 193.6L554.5 266.9L531.9 292.4zM724.7 101.0L750.2 78.3L823.0 5.5L845.6 -19.9L844.9 -20.6L819.5 2.0L746.7 74.8L724.0 100.3zM916.4 -90.6L941.8 -113.3L1015.1 -186.6L1037.8 -212.1L1037.1 -212.8L1011.6 -190.1L938.3 -116.8L915.6 -91.4zM95.4 1120.4L120.8 1097.7L1312.7 -94.2L1335.4 -119.6L1334.6 -120.4L1309.2 -97.7L117.3 1094.2L94.6 1119.6zM514.3 1079.4L539.7 1056.8L612.5 984.0L635.2 958.6L634.4 957.8L609.0 980.5L536.2 1053.3L513.6 1078.7zM705.9 887.8L731.3 865.2L804.1 792.4L826.8 767.0L826.0 766.2L800.6 788.9L727.8 861.7L705.2 887.1zM897.5 696.2L922.9 673.6L996.3 600.3L1018.9 574.8L1018.2 574.1L992.7 596.7L919.4 670.1L896.8 695.5zM1089.6 504.1L1115.1 481.5L1187.9 408.7L1210.5 383.2L1209.8 382.5L1184.3 405.1L1111.5 477.9L1088.9 503.4zM1281.2 312.5L1306.7 289.9L1380.0 216.5L1402.6 191.1L1401.9 190.4L1376.5 213.0L1303.1 286.3L1280.5 311.8zM1473.3 120.4L1498.8 97.8L1690.7 -94.2L1713.4 -119.6L1712.6 -120.4L1687.2 -97.7L1495.2 94.2L1472.6 119.7zM852.4 1120.4L877.8 1097.7L2069.7 -94.2L2092.4 -119.6L2091.6 -120.4L2066.2 -97.7L874.3 1094.2L851.6 1119.6zM1258.0 1094.7L1283.5 1072.0L1356.8 998.7L1379.5 973.3L1378.7 972.5L1353.3 995.2L1280.0 1068.5L1257.3 1094.0zM1450.2 902.5L1475.6 879.9L1548.4 807.1L1571.1 781.6L1570.4 780.9L1544.9 803.6L1472.1 876.4L1449.5 901.8zM1641.8 710.9L1667.2 688.3L1740.6 615.0L1763.2 589.5L1762.5 588.8L1737.0 611.4L1663.7 684.8L1641.1 710.2zM1833.9 518.8L1859.4 496.2L2449.7 -94.2L2472.4 -119.6L2471.6 -120.4L2446.2 -97.7L1855.8 492.6L1833.2 518.1z"/>
<text x="123" y="141" font-family="Liberation Sans,Noto Sans CJK SC,sans-serif" font-size="46" font-weight="500" text-anchor="middle">易</text>
<text x="498" y="159" font-family="Liberation Sans,Noto Sans CJK SC,sans-serif" font-size="46" font-weight="500" text-anchor="middle">易</text>
<text x="867" y="163" font-family="Liberation Sans,Noto Sans CJK SC,sans-serif" font-size="46" font-weight="500" text-anchor="middle">易</text>
<text x="1238" y="151" font-family="Liberation Sans,Noto Sans CJK SC,sans-serif" font-size="46" font-weight="500" text-anchor="middle">易</text>
<text x="306" y="364" font-family="Liberation Sans,Noto Sans CJK SC,sans-serif" font-size="46" font-weight="500" text-anchor="middle">易</text>
<text x="687" y="362" font-family="Liberation Sans,Noto Sans CJK SC,sans-serif" font-size="46" font-weight="500" text-anchor="middle">易</text>
<text x="1056" y="362" font-family="Liberation Sans,Noto Sans CJK SC,sans-serif" font-size="46" font-weight="500" text-anchor="middle">易</text>
<text x="125" y="536" font-family="Liberation Sans,Noto Sans CJK SC,sans-serif" font-size="46" font-weight="500" text-anchor="middle">易</text>
<text x="498" y="556" font-family="Liberation Sans,Noto Sans CJK SC,sans-serif" font-size="46" font-weight="500" text-anchor="middle">易</text>
<text x="869" y="557" font-family="Liberation Sans,Noto Sans CJK SC,sans-serif" font-size="46" font-weight="500" text-anchor="middle">易</text>
<text x="1240" y="556" font-family="Liberation Sans,Noto Sans CJK SC,sans-serif" font-size="46" font-weight="500" text-anchor="middle">易</text>
<text x="307" y="743" font-family="Liberation Sans,Noto Sans CJK SC,sans-serif" font-size="46" font-weight="500" text-anchor="middle">易</text>
<text x="680" y="749" font-family="Liberation Sans,Noto Sans CJK SC,sans-serif" font-size="46" font-weight="500" text-anchor="middle">易</text>
<text x="1049" y="749" font-family="Liberation Sans,Noto Sans CJK SC,sans-serif" font-size="46" font-weight="500" text-anchor="middle">易</text>
<text x="120" y="921" font-family="Liberation Sans,Noto Sans CJK SC,sans-serif" font-size="46" font-weight="500" text-anchor="middle">易</text>
<text x="496" y="940" font-family="Liberation Sans,Noto Sans CJK SC,sans-serif" font-size="46" font-weight="500" text-anchor="middle">易</text>
<text x="865" y="943" font-family="Liberation Sans,Noto Sans CJK SC,sans-serif" font-size="46" font-weight="500" text-anchor="middle">易</text>
<text x="1235" y="938" font-family="Liberation Sans,Noto Sans CJK SC,sans-serif" font-size="46" font-weight="500" text-anchor="middle">易</text>
<text x="-65" y="362" font-family="Liberation Sans,Noto Sans CJK SC,sans-serif" font-size="46" font-weight="500" text-anchor="middle">易</text>
<text x="-60" y="749" font-family="Liberation Sans,Noto Sans CJK SC,sans-serif" font-size="46" font-weight="500" text-anchor="middle">易</text>
<text transform="translate(-66.3 512.3) rotate(47.9)" x="0" y="7" font-family="Liberation Sans,Noto Sans CJK SC,sans-serif" font-size="28" text-anchor="middle" textLength="90">yitu.cn</text>
<text transform="translate(299.0 916.0) rotate(47.9)" x="0" y="7" font-family="Liberation Sans,Noto Sans CJK SC,sans-serif" font-size="28" text-anchor="middle" textLength="90">yitu.cn</text>
<text transform="translate(125.3 320.7) rotate(47.9)" x="0" y="7" font-family="Liberation Sans,Noto Sans CJK SC,sans-serif" font-size="28" text-anchor="middle" textLength="90">yitu.cn</text>
<text transform="translate(490.6 724.4) rotate(47.9)" x="0" y="7" font-family="Liberation Sans,Noto Sans CJK SC,sans-serif" font-size="28" text-anchor="middle" textLength="90">yitu.cn</text>
<text transform="translate(316.9 129.1) rotate(47.9)" x="0" y="7" font-family="Liberation Sans,Noto Sans CJK SC,sans-serif" font-size="28" text-anchor="middle" textLength="90">yitu.cn</text>
<text transform="translate(682.2 532.8) rotate(47.9)" x="0" y="7" font-family="Liberation Sans,Noto Sans CJK SC,sans-serif" font-size="28" text-anchor="middle" textLength="90">yitu.cn</text>
<text transform="translate(1041.8 930.2) rotate(47.9)" x="0" y="7" font-family="Liberation Sans,Noto Sans CJK SC,sans-serif" font-size="28" text-anchor="middle" textLength="90">yitu.cn</text>
<text transform="translate(509.0 -63.0) rotate(47.9)" x="0" y="7" font-family="Liberation Sans,Noto Sans CJK SC,sans-serif" font-size="28" text-anchor="middle" textLength="90">yitu.cn</text>
<text transform="translate(874.3 340.7) rotate(47.9)" x="0" y="7" font-family="Liberation Sans,Noto Sans CJK SC,sans-serif" font-size="28" text-anchor="middle" textLength="90">yitu.cn</text>
<text transform="translate(1233.9 738.1) rotate(47.9)" x="0" y="7" font-family="Liberation Sans,Noto Sans CJK SC,sans-serif" font-size="28" text-anchor="middle" textLength="90">yitu.cn</text>
<text transform="translate(1065.9 149.1) rotate(47.9)" x="0" y="7" font-family="Liberation Sans,Noto Sans CJK SC,sans-serif" font-size="28" text-anchor="middle" textLength="90">yitu.cn</text>
<text transform="translate(1258.0 -43.0) rotate(47.9)" x="0" y="7" font-family="Liberation Sans,Noto Sans CJK SC,sans-serif" font-size="28" text-anchor="middle" textLength="90">yitu.cn</text>
<text transform="translate(113.7 711.3) rotate(-45.0)" x="0" y="7" font-family="Liberation Sans,Noto Sans CJK SC,sans-serif" font-size="28" text-anchor="middle" textLength="90">yitu.cn</text>
<text transform="translate(305.3 519.7) rotate(-45.0)" x="0" y="7" font-family="Liberation Sans,Noto Sans CJK SC,sans-serif" font-size="28" text-anchor="middle" textLength="90">yitu.cn</text>
<text transform="translate(496.9 328.1) rotate(-45.0)" x="0" y="7" font-family="Liberation Sans,Noto Sans CJK SC,sans-serif" font-size="28" text-anchor="middle" textLength="90">yitu.cn</text>
<text transform="translate(689.0 136.0) rotate(-45.0)" x="0" y="7" font-family="Liberation Sans,Noto Sans CJK SC,sans-serif" font-size="28" text-anchor="middle" textLength="90">yitu.cn</text>
<text transform="translate(880.6 -55.6) rotate(-45.0)" x="0" y="7" font-family="Liberation Sans,Noto Sans CJK SC,sans-serif" font-size="28" text-anchor="middle" textLength="90">yitu.cn</text>
<text transform="translate(670.2 922.8) rotate(-45.0)" x="0" y="7" font-family="Liberation Sans,Noto Sans CJK SC,sans-serif" font-size="28" text-anchor="middle" textLength="90">yitu.cn</text>
<text transform="translate(861.8 731.2) rotate(-45.0)" x="0" y="7" font-family="Liberation Sans,Noto Sans CJK SC,sans-serif" font-size="28" text-anchor="middle" textLength="90">yitu.cn</text>
<text transform="translate(1053.9 539.1) rotate(-45.0)" x="0" y="7" font-family="Liberation Sans,Noto Sans CJK SC,sans-serif" font-size="28" text-anchor="middle" textLength="90">yitu.cn</text>
<text transform="translate(1245.5 347.5) rotate(-45.0)" x="0" y="7" font-family="Liberation Sans,Noto Sans CJK SC,sans-serif" font-size="28" text-anchor="middle" textLength="90">yitu.cn</text>
<text x="1078.500" y="875.500" font-family="Liberation Sans,Noto Sans CJK SC,sans-serif" font-size="73" font-weight="900" text-anchor="middle" textLength="234" lengthAdjust="spacingAndGlyphs">易图网</text>
</g>
</svg>
<!--/WM-->
</div>
</body>
</html>
